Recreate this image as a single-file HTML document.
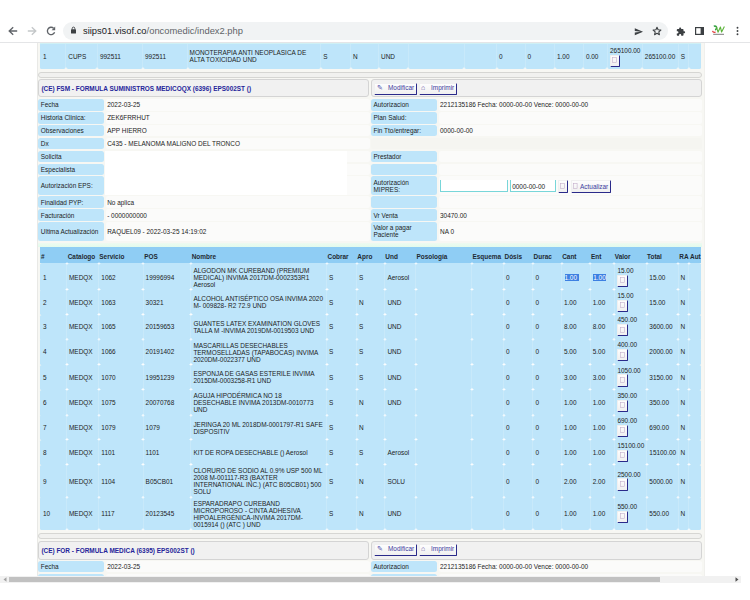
<!DOCTYPE html>
<html><head><meta charset="utf-8"><style>
html,body{margin:0;padding:0;width:750px;height:600px;overflow:hidden;background:#fff;position:relative}
body>div,body>svg{position:absolute}
.t{position:absolute;font-family:"Liberation Sans",sans-serif;font-size:6.45px;white-space:nowrap}
.btn{position:absolute;box-sizing:border-box;background:linear-gradient(#fdfdfd,#f0f0f0);border:1px solid #f0f0f0;border-right:1px solid #2a2a8a;border-bottom:1.3px solid #2a2a8a;border-radius:1.2px}
</style></head><body>
<div style="left:0;top:0;width:750px;height:42px;background:#fff"></div>
<div style="left:0;top:42px;width:750px;height:1px;background:#e4e5e7"></div>
<svg style="position:absolute;left:7px;top:25px" width="12" height="12" viewBox="0 0 12 12"><path d="M10.2 6H2.5M6.2 2.2L2.2 6L6.2 9.8" stroke="#5f6368" stroke-width="1.35" fill="none"/></svg>
<svg style="position:absolute;left:26px;top:25px" width="12" height="12" viewBox="0 0 12 12"><path d="M1.8 6H9.5M5.8 2.2L9.8 6L5.8 9.8" stroke="#c4c7c9" stroke-width="1.35" fill="none"/></svg>
<svg style="position:absolute;left:44.5px;top:25px" width="12" height="12" viewBox="0 0 12 12"><path d="M9.6 7.2A3.7 3.7 0 1 1 8.6 3.2" stroke="#5f6368" stroke-width="1.35" fill="none"/><path d="M10.2 1.6V5.2H6.6Z" fill="#5f6368"/></svg>
<div style="left:63.00px;top:22.00px;width:605.00px;height:18.00px;background:#f1f3f4;border-radius:9px"></div>
<svg style="position:absolute;left:70px;top:26px" width="7" height="8" viewBox="0 0 7 8"><rect x="1" y="3.3" width="5" height="4.2" rx="0.5" fill="#3c4043"/><path d="M2.2 3.5V2.4A1.3 1.3 0 0 1 4.8 2.4V3.5" stroke="#3c4043" stroke-width="0.9" fill="none"/></svg>
<div class="t" style="left:83px;top:25px;font-size:9.4px;line-height:12px;color:#202124">siips01.visof.co<span style="color:#5f6368">/oncomedic/index2.php</span></div>
<svg style="position:absolute;left:633.5px;top:26.5px" width="9.5" height="9.5" viewBox="0 0 24 24"><path d="M2.01 21L23 12 2.01 3 2 10l15 2-15 2z" fill="#3c4043"/></svg>
<svg style="position:absolute;left:652px;top:26px" width="10" height="10" viewBox="0 0 10 10"><path d="M5 1.2L6.1 3.8L8.9 4L6.8 5.8L7.4 8.7L5 7.2L2.6 8.7L3.2 5.8L1.1 4L3.9 3.8Z" fill="none" stroke="#3c4043" stroke-width="1.1" stroke-linejoin="round"/></svg>
<svg style="position:absolute;left:676px;top:26.5px" width="9.5" height="9.5" viewBox="0 0 24 24"><path d="M20.5 11H19V7c0-1.1-.9-2-2-2h-4V3.5C13 2.12 11.88 1 10.5 1S8 2.12 8 3.5V5H4c-1.1 0-1.99.9-1.99 2v3.8H3.5c1.49 0 2.7 1.21 2.7 2.7s-1.21 2.7-2.7 2.7H2V20c0 1.1.9 2 2 2h3.8v-1.5c0-1.490 1.21-2.7 2.7-2.7 1.49 0 2.7 1.21 2.7 2.7V22H17c1.1 0 2-.9 2-2v-4h1.5c1.38 0 2.5-1.12 2.5-2.5S21.88 11 20.5 11z" fill="#3c4043"/></svg>
<svg style="position:absolute;left:695px;top:27px" width="9" height="8" viewBox="0 0 9 8"><rect x="0.6" y="0.6" width="7.8" height="6.8" fill="none" stroke="#3c4043" stroke-width="1.2"/><rect x="5.6" y="0.6" width="2.8" height="6.8" fill="#3c4043"/></svg>
<svg style="position:absolute;left:708px;top:22px" width="20" height="18" viewBox="0 0 20 18"><path d="M5.8 4.3Q8 3.6 8.6 5.2Q9 7 7.2 8" stroke="#2e9e3e" stroke-width="1.5" fill="none"/><path d="M8.4 4.6L10 10.2L12.4 5L13.6 10L16.4 4.6" stroke="#5cb43a" stroke-width="1.1" fill="none" stroke-linejoin="round"/><path d="M4.5 8.8Q5 10.8 7.6 10.2" stroke="#e23a3a" stroke-width="1.2" fill="none"/><path d="M5.2 12.3H16" stroke="#444" stroke-width="0.7"/></svg>
<svg style="position:absolute;left:735px;top:26px" width="5" height="10" viewBox="0 0 5 10"><circle cx="2.5" cy="1.8" r="0.95" fill="#3c4043"/><circle cx="2.5" cy="5" r="0.95" fill="#3c4043"/><circle cx="2.5" cy="8.2" r="0.95" fill="#3c4043"/></svg>
<div style="left:0.00px;top:43.00px;width:750.00px;height:533.00px;background:#fff"></div>
<div style="left:37.00px;top:43.00px;width:667.50px;height:533.00px;background:#f7f7f3;border-left:1px solid #e9e9e6;border-right:1px solid #f0f0ed;box-sizing:border-box"></div>
<div style="left:40.00px;top:43.00px;width:661.20px;height:25.80px;background:#bee5fa;border-radius:1.6px"></div>
<div style="left:65.30px;top:43.00px;width:1.00px;height:25.80px;background:#c8e9fa"></div>
<div style="left:96.90px;top:43.00px;width:1.00px;height:25.80px;background:#c8e9fa"></div>
<div style="left:142.00px;top:43.00px;width:1.00px;height:25.80px;background:#c8e9fa"></div>
<div style="left:187.30px;top:43.00px;width:1.00px;height:25.80px;background:#c8e9fa"></div>
<div style="left:320.20px;top:43.00px;width:1.00px;height:25.80px;background:#c8e9fa"></div>
<div style="left:350.00px;top:43.00px;width:1.00px;height:25.80px;background:#c8e9fa"></div>
<div style="left:378.00px;top:43.00px;width:1.00px;height:25.80px;background:#c8e9fa"></div>
<div style="left:407.60px;top:43.00px;width:1.00px;height:25.80px;background:#c8e9fa"></div>
<div style="left:463.70px;top:43.00px;width:1.00px;height:25.80px;background:#c8e9fa"></div>
<div style="left:496.00px;top:43.00px;width:1.00px;height:25.80px;background:#c8e9fa"></div>
<div style="left:524.60px;top:43.00px;width:1.00px;height:25.80px;background:#c8e9fa"></div>
<div style="left:554.00px;top:43.00px;width:1.00px;height:25.80px;background:#c8e9fa"></div>
<div style="left:582.90px;top:43.00px;width:1.00px;height:25.80px;background:#c8e9fa"></div>
<div style="left:606.60px;top:43.00px;width:1.00px;height:25.80px;background:#c8e9fa"></div>
<div style="left:641.80px;top:43.00px;width:1.00px;height:25.80px;background:#c8e9fa"></div>
<div style="left:677.70px;top:43.00px;width:1.00px;height:25.80px;background:#c8e9fa"></div>
<div style="left:688.00px;top:43.00px;width:1.00px;height:25.80px;background:#c8e9fa"></div>
<div style="left:63.80px;top:67.30px;width:4px;height:3px;background:radial-gradient(closest-side,#fafaf8,rgba(255,255,255,0))"></div>
<div style="left:95.40px;top:67.30px;width:4px;height:3px;background:radial-gradient(closest-side,#fafaf8,rgba(255,255,255,0))"></div>
<div style="left:140.50px;top:67.30px;width:4px;height:3px;background:radial-gradient(closest-side,#fafaf8,rgba(255,255,255,0))"></div>
<div style="left:185.80px;top:67.30px;width:4px;height:3px;background:radial-gradient(closest-side,#fafaf8,rgba(255,255,255,0))"></div>
<div style="left:318.70px;top:67.30px;width:4px;height:3px;background:radial-gradient(closest-side,#fafaf8,rgba(255,255,255,0))"></div>
<div style="left:348.50px;top:67.30px;width:4px;height:3px;background:radial-gradient(closest-side,#fafaf8,rgba(255,255,255,0))"></div>
<div style="left:376.50px;top:67.30px;width:4px;height:3px;background:radial-gradient(closest-side,#fafaf8,rgba(255,255,255,0))"></div>
<div style="left:406.10px;top:67.30px;width:4px;height:3px;background:radial-gradient(closest-side,#fafaf8,rgba(255,255,255,0))"></div>
<div style="left:462.20px;top:67.30px;width:4px;height:3px;background:radial-gradient(closest-side,#fafaf8,rgba(255,255,255,0))"></div>
<div style="left:494.50px;top:67.30px;width:4px;height:3px;background:radial-gradient(closest-side,#fafaf8,rgba(255,255,255,0))"></div>
<div style="left:523.10px;top:67.30px;width:4px;height:3px;background:radial-gradient(closest-side,#fafaf8,rgba(255,255,255,0))"></div>
<div style="left:552.50px;top:67.30px;width:4px;height:3px;background:radial-gradient(closest-side,#fafaf8,rgba(255,255,255,0))"></div>
<div style="left:581.40px;top:67.30px;width:4px;height:3px;background:radial-gradient(closest-side,#fafaf8,rgba(255,255,255,0))"></div>
<div style="left:605.10px;top:67.30px;width:4px;height:3px;background:radial-gradient(closest-side,#fafaf8,rgba(255,255,255,0))"></div>
<div style="left:640.30px;top:67.30px;width:4px;height:3px;background:radial-gradient(closest-side,#fafaf8,rgba(255,255,255,0))"></div>
<div style="left:676.20px;top:67.30px;width:4px;height:3px;background:radial-gradient(closest-side,#fafaf8,rgba(255,255,255,0))"></div>
<div style="left:686.50px;top:67.30px;width:4px;height:3px;background:radial-gradient(closest-side,#fafaf8,rgba(255,255,255,0))"></div>
<div style="left:40.00px;top:43.00px;width:661.20px;height:1.20px;background:#cff0f4"></div>
<div class="t" style="left:43.00px;top:52.75px;line-height:7px;color:#1c1c1c">1</div>
<div class="t" style="left:68.30px;top:52.75px;line-height:7px;color:#1c1c1c">CUPS</div>
<div class="t" style="left:99.90px;top:52.75px;line-height:7px;color:#1c1c1c">992511</div>
<div class="t" style="left:145.00px;top:52.75px;line-height:7px;color:#1c1c1c">992511</div>
<div class="t" style="left:323.20px;top:52.75px;line-height:7px;color:#1c1c1c">S</div>
<div class="t" style="left:353.00px;top:52.75px;line-height:7px;color:#1c1c1c">N</div>
<div class="t" style="left:381.00px;top:52.75px;line-height:7px;color:#1c1c1c">UND</div>
<div class="t" style="left:499.00px;top:52.75px;line-height:7px;color:#1c1c1c">0</div>
<div class="t" style="left:527.60px;top:52.75px;line-height:7px;color:#1c1c1c">0</div>
<div class="t" style="left:557.00px;top:52.75px;line-height:7px;color:#1c1c1c">1.00</div>
<div class="t" style="left:585.90px;top:52.75px;line-height:7px;color:#1c1c1c">0.00</div>
<div class="t" style="left:644.80px;top:52.75px;line-height:7px;color:#1c1c1c">265100.00</div>
<div class="t" style="left:680.70px;top:52.75px;line-height:7px;color:#1c1c1c">S</div>
<div class="t" style="left:189.60px;top:49.25px;line-height:7px;color:#1c1c1c">MONOTERAPIA ANTI NEOPLASICA DE<br>ALTA TOXICIDAD UND</div>
<div class="t" style="left:610.00px;top:46.55px;line-height:7px;color:#1c1c1c">265100.00</div>
<div class="btn" style="left:610.00px;top:54.50px;width:10.30px;height:12.30px;"></div>
<svg style="position:absolute;left:612.35px;top:57.05px" width="5" height="6" viewBox="0 0 5 6"><rect x="0.5" y="0.5" width="4" height="5" fill="none" stroke="#c0a8c8" stroke-width="0.55"/></svg>
<div style="left:38.30px;top:72.30px;width:664.20px;height:5.40px;background:#f1f1ef;border:1px solid #d6d6d3;border-radius:3px;box-sizing:border-box"></div>
<div style="left:38.30px;top:79.30px;width:330.40px;height:18.20px;background:#f1f1f1;border:1px solid #d4d4d4;border-radius:3px;box-sizing:border-box"></div>
<div style="left:371.40px;top:79.30px;width:331.10px;height:18.20px;background:#f1f1f1;border:1px solid #d4d4d4;border-radius:3px;box-sizing:border-box"></div>
<div class="t" style="left:41.40px;top:84.85px;line-height:7px;color:#25259a;font-weight:bold">(CE) FSM - FORMULA SUMINISTROS MEDICOQX (6396) EPS002ST ()</div>
<div class="btn" style="left:374.00px;top:82.60px;width:43.00px;height:12.00px;"></div>
<div class="t" style="left:377.30px;top:84.15px;line-height:7px;color:#4848a8;font-size:6.5px">&#9998;</div>
<div class="t" style="left:388.00px;top:84.15px;line-height:7px;color:#3c3ca0">Modificar</div>
<div class="btn" style="left:419.30px;top:82.60px;width:37.70px;height:12.00px;"></div>
<div class="t" style="left:421.00px;top:84.15px;line-height:7px;color:#6a5aa8;font-size:7px">&#8962;</div>
<div class="t" style="left:431.00px;top:84.15px;line-height:7px;color:#3c3ca0">Imprimir</div>
<div style="left:38.30px;top:99.00px;width:65.70px;height:11.70px;background:#bee5fa;border-radius:2.5px"></div>
<div style="left:105.60px;top:99.00px;width:264.00px;height:11.70px;background:#fbfbfa;border-radius:2.5px"></div>
<div class="t" style="left:40.80px;top:101.45px;line-height:7px;color:#1c1c1c">Fecha</div>
<div class="t" style="left:107.20px;top:101.45px;line-height:7px;color:#1c1c1c">2022-03-25</div>
<div style="left:371.30px;top:99.00px;width:65.70px;height:11.70px;background:#bee5fa;border-radius:2.5px"></div>
<div style="left:438.60px;top:99.00px;width:263.90px;height:11.70px;background:#fbfbfa;border-radius:2.5px"></div>
<div class="t" style="left:373.50px;top:101.45px;line-height:7px;color:#1c1c1c">Autorizacion</div>
<div class="t" style="left:440.00px;top:101.45px;line-height:7px;color:#1c1c1c">2212135186 Fecha: 0000-00-00 Vence: 0000-00-00</div>
<div style="left:38.30px;top:111.90px;width:65.70px;height:11.70px;background:#bee5fa;border-radius:2.5px"></div>
<div style="left:105.60px;top:111.90px;width:264.00px;height:11.70px;background:#fbfbfa;border-radius:2.5px"></div>
<div class="t" style="left:40.80px;top:114.35px;line-height:7px;color:#1c1c1c">Historia Clinica:</div>
<div class="t" style="left:107.20px;top:114.35px;line-height:7px;color:#1c1c1c">ZEK6FRRHUT</div>
<div style="left:371.30px;top:111.90px;width:65.70px;height:11.70px;background:#bee5fa;border-radius:2.5px"></div>
<div style="left:438.60px;top:111.90px;width:263.90px;height:11.70px;background:#fbfbfa;border-radius:2.5px"></div>
<div class="t" style="left:373.50px;top:114.35px;line-height:7px;color:#1c1c1c">Plan Salud:</div>
<div style="left:38.30px;top:124.80px;width:65.70px;height:11.70px;background:#bee5fa;border-radius:2.5px"></div>
<div style="left:105.60px;top:124.80px;width:264.00px;height:11.70px;background:#fbfbfa;border-radius:2.5px"></div>
<div class="t" style="left:40.80px;top:127.25px;line-height:7px;color:#1c1c1c">Observaciones</div>
<div class="t" style="left:107.20px;top:127.25px;line-height:7px;color:#1c1c1c">APP HIERRO</div>
<div style="left:371.30px;top:124.80px;width:65.70px;height:11.70px;background:#bee5fa;border-radius:2.5px"></div>
<div style="left:438.60px;top:124.80px;width:263.90px;height:11.70px;background:#fbfbfa;border-radius:2.5px"></div>
<div class="t" style="left:373.50px;top:127.25px;line-height:7px;color:#1c1c1c">Fin Tto/entregar:</div>
<div class="t" style="left:440.00px;top:127.25px;line-height:7px;color:#1c1c1c">0000-00-00</div>
<div style="left:38.30px;top:137.70px;width:65.70px;height:11.60px;background:#bee5fa;border-radius:2.5px"></div>
<div style="left:105.60px;top:137.70px;width:264.00px;height:11.60px;background:#fbfbfa;border-radius:2.5px"></div>
<div class="t" style="left:40.80px;top:140.10px;line-height:7px;color:#1c1c1c">Dx</div>
<div class="t" style="left:107.20px;top:140.10px;line-height:7px;color:#1c1c1c">C435 - MELANOMA MALIGNO DEL TRONCO</div>
<div style="left:371.30px;top:137.70px;width:331.20px;height:11.60px;background:#f5f5f1;border-radius:2.5px"></div>
<div style="left:38.30px;top:150.60px;width:65.70px;height:11.70px;background:#bee5fa;border-radius:2.5px"></div>
<div style="left:105.60px;top:150.60px;width:264.00px;height:11.70px;background:#fbfbfa;border-radius:2.5px"></div>
<div class="t" style="left:40.80px;top:153.05px;line-height:7px;color:#1c1c1c">Solicita</div>
<div style="left:371.30px;top:150.60px;width:65.70px;height:11.70px;background:#bee5fa;border-radius:2.5px"></div>
<div style="left:438.60px;top:150.60px;width:263.90px;height:11.70px;background:#fbfbfa;border-radius:2.5px"></div>
<div class="t" style="left:373.50px;top:153.05px;line-height:7px;color:#1c1c1c">Prestador</div>
<div style="left:38.30px;top:163.50px;width:65.70px;height:11.70px;background:#bee5fa;border-radius:2.5px"></div>
<div style="left:105.60px;top:163.50px;width:264.00px;height:11.70px;background:#fbfbfa;border-radius:2.5px"></div>
<div class="t" style="left:40.80px;top:165.95px;line-height:7px;color:#1c1c1c">Especialista</div>
<div style="left:371.30px;top:163.50px;width:65.70px;height:11.70px;background:#bee5fa;border-radius:2.5px"></div>
<div style="left:438.60px;top:163.50px;width:263.90px;height:11.70px;background:#fbfbfa;border-radius:2.5px"></div>
<div style="left:38.30px;top:176.40px;width:65.70px;height:18.40px;background:#bee5fa;border-radius:2.5px"></div>
<div style="left:105.60px;top:176.40px;width:264.00px;height:18.40px;background:#fbfbfa;border-radius:2.5px"></div>
<div class="t" style="left:40.80px;top:182.20px;line-height:7px;color:#1c1c1c">Autorizaci&oacute;n EPS:</div>
<div style="left:371.30px;top:176.40px;width:65.70px;height:18.40px;background:#bee5fa;border-radius:2.5px"></div>
<div style="left:438.60px;top:176.40px;width:263.90px;height:18.40px;background:#fbfbfa;border-radius:2.5px"></div>
<div class="t" style="left:373.50px;top:178.65px;line-height:7px;color:#1c1c1c">Autorizaci&oacute;n<br>MIPRES:</div>
<div style="left:38.30px;top:196.20px;width:65.70px;height:11.60px;background:#bee5fa;border-radius:2.5px"></div>
<div style="left:105.60px;top:196.20px;width:264.00px;height:11.60px;background:#fbfbfa;border-radius:2.5px"></div>
<div class="t" style="left:40.80px;top:198.60px;line-height:7px;color:#1c1c1c">Finalidad PYP:</div>
<div class="t" style="left:107.20px;top:198.60px;line-height:7px;color:#1c1c1c">No aplica</div>
<div style="left:371.30px;top:196.20px;width:65.70px;height:11.60px;background:#bee5fa;border-radius:2.5px"></div>
<div style="left:438.60px;top:196.20px;width:263.90px;height:11.60px;background:#fbfbfa;border-radius:2.5px"></div>
<div style="left:38.30px;top:209.10px;width:65.70px;height:11.70px;background:#bee5fa;border-radius:2.5px"></div>
<div style="left:105.60px;top:209.10px;width:264.00px;height:11.70px;background:#fbfbfa;border-radius:2.5px"></div>
<div class="t" style="left:40.80px;top:211.55px;line-height:7px;color:#1c1c1c">Facturaci&oacute;n</div>
<div class="t" style="left:107.20px;top:211.55px;line-height:7px;color:#1c1c1c">- 0000000000</div>
<div style="left:371.30px;top:209.10px;width:65.70px;height:11.70px;background:#bee5fa;border-radius:2.5px"></div>
<div style="left:438.60px;top:209.10px;width:263.90px;height:11.70px;background:#fbfbfa;border-radius:2.5px"></div>
<div class="t" style="left:373.50px;top:211.55px;line-height:7px;color:#1c1c1c">Vr Venta</div>
<div class="t" style="left:440.00px;top:211.55px;line-height:7px;color:#1c1c1c">30470.00</div>
<div style="left:38.30px;top:222.00px;width:65.70px;height:18.80px;background:#bee5fa;border-radius:2.5px"></div>
<div style="left:105.60px;top:222.00px;width:264.00px;height:18.80px;background:#fbfbfa;border-radius:2.5px"></div>
<div class="t" style="left:40.80px;top:228.00px;line-height:7px;color:#1c1c1c">Ultima Actualizaci&oacute;n</div>
<div class="t" style="left:107.20px;top:228.00px;line-height:7px;color:#1c1c1c">RAQUEL09 - 2022-03-25 14:19:02</div>
<div style="left:371.30px;top:222.00px;width:65.70px;height:18.80px;background:#bee5fa;border-radius:2.5px"></div>
<div style="left:438.60px;top:222.00px;width:263.90px;height:18.80px;background:#fbfbfa;border-radius:2.5px"></div>
<div class="t" style="left:373.50px;top:224.45px;line-height:7px;color:#1c1c1c">Valor a pagar<br>Paciente</div>
<div class="t" style="left:440.00px;top:228.00px;line-height:7px;color:#1c1c1c">NA 0</div>
<div style="left:105.00px;top:150.80px;width:241.80px;height:44.20px;background:#fff"></div>
<div style="left:440.00px;top:179.50px;width:68.00px;height:12.80px;background:#fff;border:1px solid #78d6d9;border-top:0;box-sizing:border-box"></div>
<div style="left:509.60px;top:179.50px;width:46.10px;height:12.80px;background:#fff;border:1px solid #78d6d9;border-top:0;box-sizing:border-box"></div>
<div class="t" style="left:512.20px;top:182.65px;line-height:7px;color:#1c1c1c">0000-00-00</div>
<div class="btn" style="left:557.80px;top:180.00px;width:10.50px;height:12.50px;"></div>
<svg style="position:absolute;left:560.25px;top:182.65px" width="5" height="6" viewBox="0 0 5 6"><rect x="0.5" y="0.5" width="4" height="5" fill="none" stroke="#c0a8c8" stroke-width="0.55"/></svg>
<div class="btn" style="left:570.50px;top:180.00px;width:40.50px;height:12.50px;"></div>
<svg style="position:absolute;left:573.3px;top:183px" width="5" height="6" viewBox="0 0 5 6"><rect x="0.5" y="0.5" width="3.6" height="5" fill="none" stroke="#c0a8c8" stroke-width="0.55"/></svg>
<div class="t" style="left:580.00px;top:182.65px;line-height:7px;color:#3c3ca0">Actualizar</div>
<div style="left:38.30px;top:243.40px;width:664.20px;height:3.60px;background:linear-gradient(#eefaf1,#e2fbec)"></div>
<div style="left:40.00px;top:246.60px;width:661.00px;height:16.40px;background:#8fcdf4"></div>
<div class="t" style="left:41.00px;top:253.05px;line-height:7px;color:#1e2a33;font-weight:bold">#</div>
<div class="t" style="left:67.70px;top:253.05px;line-height:7px;color:#1e2a33;font-weight:bold">Catalogo</div>
<div class="t" style="left:99.30px;top:253.05px;line-height:7px;color:#1e2a33;font-weight:bold">Servicio</div>
<div class="t" style="left:144.30px;top:253.05px;line-height:7px;color:#1e2a33;font-weight:bold">POS</div>
<div class="t" style="left:191.70px;top:253.05px;line-height:7px;color:#1e2a33;font-weight:bold">Nombre</div>
<div class="t" style="left:327.50px;top:253.05px;line-height:7px;color:#1e2a33;font-weight:bold">Cobrar</div>
<div class="t" style="left:357.30px;top:253.05px;line-height:7px;color:#1e2a33;font-weight:bold">Apro</div>
<div class="t" style="left:385.30px;top:253.05px;line-height:7px;color:#1e2a33;font-weight:bold">Und</div>
<div class="t" style="left:416.50px;top:253.05px;line-height:7px;color:#1e2a33;font-weight:bold">Posolog&iacute;a</div>
<div class="t" style="left:472.50px;top:253.05px;line-height:7px;color:#1e2a33;font-weight:bold">Esquema</div>
<div class="t" style="left:504.50px;top:253.05px;line-height:7px;color:#1e2a33;font-weight:bold">D&oacute;sis</div>
<div class="t" style="left:533.60px;top:253.05px;line-height:7px;color:#1e2a33;font-weight:bold">Durac</div>
<div class="t" style="left:562.20px;top:253.05px;line-height:7px;color:#1e2a33;font-weight:bold">Cant</div>
<div class="t" style="left:591.00px;top:253.05px;line-height:7px;color:#1e2a33;font-weight:bold">Ent</div>
<div class="t" style="left:614.80px;top:253.05px;line-height:7px;color:#1e2a33;font-weight:bold">Valor</div>
<div class="t" style="left:647.00px;top:253.05px;line-height:7px;color:#1e2a33;font-weight:bold">Total</div>
<div class="t" style="left:679.30px;top:253.05px;line-height:7px;color:#1e2a33;font-weight:bold">RA</div>
<div class="t" style="left:690.00px;top:253.05px;line-height:7px;color:#1e2a33;font-weight:bold">Aut</div>
<div style="left:40.00px;top:263.00px;width:661.30px;height:27.50px;background:#bee5fa;border-radius:1.6px"></div>
<div style="left:66.00px;top:263.00px;width:1.00px;height:27.50px;background:#c8e9fa"></div>
<div style="left:98.30px;top:263.00px;width:1.00px;height:27.50px;background:#c8e9fa"></div>
<div style="left:142.60px;top:263.00px;width:1.00px;height:27.50px;background:#c8e9fa"></div>
<div style="left:190.00px;top:263.00px;width:1.00px;height:27.50px;background:#c8e9fa"></div>
<div style="left:326.00px;top:263.00px;width:1.00px;height:27.50px;background:#c8e9fa"></div>
<div style="left:356.00px;top:263.00px;width:1.00px;height:27.50px;background:#c8e9fa"></div>
<div style="left:384.40px;top:263.00px;width:1.00px;height:27.50px;background:#c8e9fa"></div>
<div style="left:415.00px;top:263.00px;width:1.00px;height:27.50px;background:#c8e9fa"></div>
<div style="left:471.30px;top:263.00px;width:1.00px;height:27.50px;background:#c8e9fa"></div>
<div style="left:503.00px;top:263.00px;width:1.00px;height:27.50px;background:#c8e9fa"></div>
<div style="left:532.40px;top:263.00px;width:1.00px;height:27.50px;background:#c8e9fa"></div>
<div style="left:561.00px;top:263.00px;width:1.00px;height:27.50px;background:#c8e9fa"></div>
<div style="left:589.70px;top:263.00px;width:1.00px;height:27.50px;background:#c8e9fa"></div>
<div style="left:613.60px;top:263.00px;width:1.00px;height:27.50px;background:#c8e9fa"></div>
<div style="left:646.30px;top:263.00px;width:1.00px;height:27.50px;background:#c8e9fa"></div>
<div style="left:677.60px;top:263.00px;width:1.00px;height:27.50px;background:#c8e9fa"></div>
<div style="left:688.00px;top:263.00px;width:1.00px;height:27.50px;background:#c8e9fa"></div>
<div style="left:64.50px;top:261.50px;width:4px;height:3px;background:radial-gradient(closest-side,#ffffff,rgba(255,255,255,0))"></div>
<div style="left:96.80px;top:261.50px;width:4px;height:3px;background:radial-gradient(closest-side,#ffffff,rgba(255,255,255,0))"></div>
<div style="left:141.10px;top:261.50px;width:4px;height:3px;background:radial-gradient(closest-side,#ffffff,rgba(255,255,255,0))"></div>
<div style="left:188.50px;top:261.50px;width:4px;height:3px;background:radial-gradient(closest-side,#ffffff,rgba(255,255,255,0))"></div>
<div style="left:324.50px;top:261.50px;width:4px;height:3px;background:radial-gradient(closest-side,#ffffff,rgba(255,255,255,0))"></div>
<div style="left:354.50px;top:261.50px;width:4px;height:3px;background:radial-gradient(closest-side,#ffffff,rgba(255,255,255,0))"></div>
<div style="left:382.90px;top:261.50px;width:4px;height:3px;background:radial-gradient(closest-side,#ffffff,rgba(255,255,255,0))"></div>
<div style="left:413.50px;top:261.50px;width:4px;height:3px;background:radial-gradient(closest-side,#ffffff,rgba(255,255,255,0))"></div>
<div style="left:469.80px;top:261.50px;width:4px;height:3px;background:radial-gradient(closest-side,#ffffff,rgba(255,255,255,0))"></div>
<div style="left:501.50px;top:261.50px;width:4px;height:3px;background:radial-gradient(closest-side,#ffffff,rgba(255,255,255,0))"></div>
<div style="left:530.90px;top:261.50px;width:4px;height:3px;background:radial-gradient(closest-side,#ffffff,rgba(255,255,255,0))"></div>
<div style="left:559.50px;top:261.50px;width:4px;height:3px;background:radial-gradient(closest-side,#ffffff,rgba(255,255,255,0))"></div>
<div style="left:588.20px;top:261.50px;width:4px;height:3px;background:radial-gradient(closest-side,#ffffff,rgba(255,255,255,0))"></div>
<div style="left:612.10px;top:261.50px;width:4px;height:3px;background:radial-gradient(closest-side,#ffffff,rgba(255,255,255,0))"></div>
<div style="left:644.80px;top:261.50px;width:4px;height:3px;background:radial-gradient(closest-side,#ffffff,rgba(255,255,255,0))"></div>
<div style="left:676.10px;top:261.50px;width:4px;height:3px;background:radial-gradient(closest-side,#ffffff,rgba(255,255,255,0))"></div>
<div style="left:686.50px;top:261.50px;width:4px;height:3px;background:radial-gradient(closest-side,#ffffff,rgba(255,255,255,0))"></div>
<div style="left:64.50px;top:288.30px;width:4px;height:3px;background:radial-gradient(closest-side,#ffffff,rgba(255,255,255,0))"></div>
<div style="left:96.80px;top:288.30px;width:4px;height:3px;background:radial-gradient(closest-side,#ffffff,rgba(255,255,255,0))"></div>
<div style="left:141.10px;top:288.30px;width:4px;height:3px;background:radial-gradient(closest-side,#ffffff,rgba(255,255,255,0))"></div>
<div style="left:188.50px;top:288.30px;width:4px;height:3px;background:radial-gradient(closest-side,#ffffff,rgba(255,255,255,0))"></div>
<div style="left:324.50px;top:288.30px;width:4px;height:3px;background:radial-gradient(closest-side,#ffffff,rgba(255,255,255,0))"></div>
<div style="left:354.50px;top:288.30px;width:4px;height:3px;background:radial-gradient(closest-side,#ffffff,rgba(255,255,255,0))"></div>
<div style="left:382.90px;top:288.30px;width:4px;height:3px;background:radial-gradient(closest-side,#ffffff,rgba(255,255,255,0))"></div>
<div style="left:413.50px;top:288.30px;width:4px;height:3px;background:radial-gradient(closest-side,#ffffff,rgba(255,255,255,0))"></div>
<div style="left:469.80px;top:288.30px;width:4px;height:3px;background:radial-gradient(closest-side,#ffffff,rgba(255,255,255,0))"></div>
<div style="left:501.50px;top:288.30px;width:4px;height:3px;background:radial-gradient(closest-side,#ffffff,rgba(255,255,255,0))"></div>
<div style="left:530.90px;top:288.30px;width:4px;height:3px;background:radial-gradient(closest-side,#ffffff,rgba(255,255,255,0))"></div>
<div style="left:559.50px;top:288.30px;width:4px;height:3px;background:radial-gradient(closest-side,#ffffff,rgba(255,255,255,0))"></div>
<div style="left:588.20px;top:288.30px;width:4px;height:3px;background:radial-gradient(closest-side,#ffffff,rgba(255,255,255,0))"></div>
<div style="left:612.10px;top:288.30px;width:4px;height:3px;background:radial-gradient(closest-side,#ffffff,rgba(255,255,255,0))"></div>
<div style="left:644.80px;top:288.30px;width:4px;height:3px;background:radial-gradient(closest-side,#ffffff,rgba(255,255,255,0))"></div>
<div style="left:676.10px;top:288.30px;width:4px;height:3px;background:radial-gradient(closest-side,#ffffff,rgba(255,255,255,0))"></div>
<div style="left:686.50px;top:288.30px;width:4px;height:3px;background:radial-gradient(closest-side,#ffffff,rgba(255,255,255,0))"></div>
<div class="t" style="left:43.00px;top:273.90px;line-height:7px;color:#1c1c1c">1</div>
<div class="t" style="left:69.00px;top:273.90px;line-height:7px;color:#1c1c1c">MEDQX</div>
<div class="t" style="left:101.30px;top:273.90px;line-height:7px;color:#1c1c1c">1062</div>
<div class="t" style="left:145.60px;top:273.90px;line-height:7px;color:#1c1c1c">19996994</div>
<div class="t" style="left:329.00px;top:273.90px;line-height:7px;color:#1c1c1c">S</div>
<div class="t" style="left:359.00px;top:273.90px;line-height:7px;color:#1c1c1c">S</div>
<div class="t" style="left:387.40px;top:273.90px;line-height:7px;color:#1c1c1c">Aerosol</div>
<div class="t" style="left:506.00px;top:273.90px;line-height:7px;color:#1c1c1c">0</div>
<div class="t" style="left:535.40px;top:273.90px;line-height:7px;color:#1c1c1c">0</div>
<div class="t" style="left:564.50px;top:273.90px;line-height:7px;color:#fff"><span style="background:#3d80e2;padding-right:1.5px">1.00</span></div>
<div class="t" style="left:593.20px;top:273.90px;line-height:7px;color:#fff"><span style="background:#3d80e2;padding-right:0px">1.00</span></div>
<div class="t" style="left:649.30px;top:273.90px;line-height:7px;color:#1c1c1c">15.00</div>
<div class="t" style="left:680.60px;top:273.90px;line-height:7px;color:#1c1c1c">N</div>
<div class="t" style="left:193.40px;top:267.10px;line-height:7px;color:#1c1c1c">ALGODON MK CUREBAND (PREMIUM<br>MEDICAL) INVIMA 2017DM-0002353R1<br>Aerosol</div>
<div class="t" style="left:617.40px;top:266.90px;line-height:7px;color:#1c1c1c">15.00</div>
<div class="btn" style="left:617.40px;top:274.70px;width:10.30px;height:12.30px;"></div>
<svg style="position:absolute;left:619.75px;top:277.25px" width="5" height="6" viewBox="0 0 5 6"><rect x="0.5" y="0.5" width="4" height="5" fill="none" stroke="#c0a8c8" stroke-width="0.55"/></svg>
<div style="left:40.00px;top:289.80px;width:661.30px;height:25.40px;background:#bee5fa;border-radius:1.6px"></div>
<div style="left:66.00px;top:289.80px;width:1.00px;height:25.40px;background:#c8e9fa"></div>
<div style="left:98.30px;top:289.80px;width:1.00px;height:25.40px;background:#c8e9fa"></div>
<div style="left:142.60px;top:289.80px;width:1.00px;height:25.40px;background:#c8e9fa"></div>
<div style="left:190.00px;top:289.80px;width:1.00px;height:25.40px;background:#c8e9fa"></div>
<div style="left:326.00px;top:289.80px;width:1.00px;height:25.40px;background:#c8e9fa"></div>
<div style="left:356.00px;top:289.80px;width:1.00px;height:25.40px;background:#c8e9fa"></div>
<div style="left:384.40px;top:289.80px;width:1.00px;height:25.40px;background:#c8e9fa"></div>
<div style="left:415.00px;top:289.80px;width:1.00px;height:25.40px;background:#c8e9fa"></div>
<div style="left:471.30px;top:289.80px;width:1.00px;height:25.40px;background:#c8e9fa"></div>
<div style="left:503.00px;top:289.80px;width:1.00px;height:25.40px;background:#c8e9fa"></div>
<div style="left:532.40px;top:289.80px;width:1.00px;height:25.40px;background:#c8e9fa"></div>
<div style="left:561.00px;top:289.80px;width:1.00px;height:25.40px;background:#c8e9fa"></div>
<div style="left:589.70px;top:289.80px;width:1.00px;height:25.40px;background:#c8e9fa"></div>
<div style="left:613.60px;top:289.80px;width:1.00px;height:25.40px;background:#c8e9fa"></div>
<div style="left:646.30px;top:289.80px;width:1.00px;height:25.40px;background:#c8e9fa"></div>
<div style="left:677.60px;top:289.80px;width:1.00px;height:25.40px;background:#c8e9fa"></div>
<div style="left:688.00px;top:289.80px;width:1.00px;height:25.40px;background:#c8e9fa"></div>
<div style="left:64.50px;top:288.30px;width:4px;height:3px;background:radial-gradient(closest-side,#ffffff,rgba(255,255,255,0))"></div>
<div style="left:96.80px;top:288.30px;width:4px;height:3px;background:radial-gradient(closest-side,#ffffff,rgba(255,255,255,0))"></div>
<div style="left:141.10px;top:288.30px;width:4px;height:3px;background:radial-gradient(closest-side,#ffffff,rgba(255,255,255,0))"></div>
<div style="left:188.50px;top:288.30px;width:4px;height:3px;background:radial-gradient(closest-side,#ffffff,rgba(255,255,255,0))"></div>
<div style="left:324.50px;top:288.30px;width:4px;height:3px;background:radial-gradient(closest-side,#ffffff,rgba(255,255,255,0))"></div>
<div style="left:354.50px;top:288.30px;width:4px;height:3px;background:radial-gradient(closest-side,#ffffff,rgba(255,255,255,0))"></div>
<div style="left:382.90px;top:288.30px;width:4px;height:3px;background:radial-gradient(closest-side,#ffffff,rgba(255,255,255,0))"></div>
<div style="left:413.50px;top:288.30px;width:4px;height:3px;background:radial-gradient(closest-side,#ffffff,rgba(255,255,255,0))"></div>
<div style="left:469.80px;top:288.30px;width:4px;height:3px;background:radial-gradient(closest-side,#ffffff,rgba(255,255,255,0))"></div>
<div style="left:501.50px;top:288.30px;width:4px;height:3px;background:radial-gradient(closest-side,#ffffff,rgba(255,255,255,0))"></div>
<div style="left:530.90px;top:288.30px;width:4px;height:3px;background:radial-gradient(closest-side,#ffffff,rgba(255,255,255,0))"></div>
<div style="left:559.50px;top:288.30px;width:4px;height:3px;background:radial-gradient(closest-side,#ffffff,rgba(255,255,255,0))"></div>
<div style="left:588.20px;top:288.30px;width:4px;height:3px;background:radial-gradient(closest-side,#ffffff,rgba(255,255,255,0))"></div>
<div style="left:612.10px;top:288.30px;width:4px;height:3px;background:radial-gradient(closest-side,#ffffff,rgba(255,255,255,0))"></div>
<div style="left:644.80px;top:288.30px;width:4px;height:3px;background:radial-gradient(closest-side,#ffffff,rgba(255,255,255,0))"></div>
<div style="left:676.10px;top:288.30px;width:4px;height:3px;background:radial-gradient(closest-side,#ffffff,rgba(255,255,255,0))"></div>
<div style="left:686.50px;top:288.30px;width:4px;height:3px;background:radial-gradient(closest-side,#ffffff,rgba(255,255,255,0))"></div>
<div style="left:64.50px;top:313.00px;width:4px;height:3px;background:radial-gradient(closest-side,#ffffff,rgba(255,255,255,0))"></div>
<div style="left:96.80px;top:313.00px;width:4px;height:3px;background:radial-gradient(closest-side,#ffffff,rgba(255,255,255,0))"></div>
<div style="left:141.10px;top:313.00px;width:4px;height:3px;background:radial-gradient(closest-side,#ffffff,rgba(255,255,255,0))"></div>
<div style="left:188.50px;top:313.00px;width:4px;height:3px;background:radial-gradient(closest-side,#ffffff,rgba(255,255,255,0))"></div>
<div style="left:324.50px;top:313.00px;width:4px;height:3px;background:radial-gradient(closest-side,#ffffff,rgba(255,255,255,0))"></div>
<div style="left:354.50px;top:313.00px;width:4px;height:3px;background:radial-gradient(closest-side,#ffffff,rgba(255,255,255,0))"></div>
<div style="left:382.90px;top:313.00px;width:4px;height:3px;background:radial-gradient(closest-side,#ffffff,rgba(255,255,255,0))"></div>
<div style="left:413.50px;top:313.00px;width:4px;height:3px;background:radial-gradient(closest-side,#ffffff,rgba(255,255,255,0))"></div>
<div style="left:469.80px;top:313.00px;width:4px;height:3px;background:radial-gradient(closest-side,#ffffff,rgba(255,255,255,0))"></div>
<div style="left:501.50px;top:313.00px;width:4px;height:3px;background:radial-gradient(closest-side,#ffffff,rgba(255,255,255,0))"></div>
<div style="left:530.90px;top:313.00px;width:4px;height:3px;background:radial-gradient(closest-side,#ffffff,rgba(255,255,255,0))"></div>
<div style="left:559.50px;top:313.00px;width:4px;height:3px;background:radial-gradient(closest-side,#ffffff,rgba(255,255,255,0))"></div>
<div style="left:588.20px;top:313.00px;width:4px;height:3px;background:radial-gradient(closest-side,#ffffff,rgba(255,255,255,0))"></div>
<div style="left:612.10px;top:313.00px;width:4px;height:3px;background:radial-gradient(closest-side,#ffffff,rgba(255,255,255,0))"></div>
<div style="left:644.80px;top:313.00px;width:4px;height:3px;background:radial-gradient(closest-side,#ffffff,rgba(255,255,255,0))"></div>
<div style="left:676.10px;top:313.00px;width:4px;height:3px;background:radial-gradient(closest-side,#ffffff,rgba(255,255,255,0))"></div>
<div style="left:686.50px;top:313.00px;width:4px;height:3px;background:radial-gradient(closest-side,#ffffff,rgba(255,255,255,0))"></div>
<div class="t" style="left:43.00px;top:298.75px;line-height:7px;color:#1c1c1c">2</div>
<div class="t" style="left:69.00px;top:298.75px;line-height:7px;color:#1c1c1c">MEDQX</div>
<div class="t" style="left:101.30px;top:298.75px;line-height:7px;color:#1c1c1c">1063</div>
<div class="t" style="left:145.60px;top:298.75px;line-height:7px;color:#1c1c1c">30321</div>
<div class="t" style="left:329.00px;top:298.75px;line-height:7px;color:#1c1c1c">S</div>
<div class="t" style="left:359.00px;top:298.75px;line-height:7px;color:#1c1c1c">N</div>
<div class="t" style="left:387.40px;top:298.75px;line-height:7px;color:#1c1c1c">UND</div>
<div class="t" style="left:506.00px;top:298.75px;line-height:7px;color:#1c1c1c">0</div>
<div class="t" style="left:535.40px;top:298.75px;line-height:7px;color:#1c1c1c">0</div>
<div class="t" style="left:564.00px;top:298.75px;line-height:7px;color:#1c1c1c">1.00</div>
<div class="t" style="left:592.70px;top:298.75px;line-height:7px;color:#1c1c1c">1.00</div>
<div class="t" style="left:649.30px;top:298.75px;line-height:7px;color:#1c1c1c">15.00</div>
<div class="t" style="left:680.60px;top:298.75px;line-height:7px;color:#1c1c1c">N</div>
<div class="t" style="left:193.40px;top:295.45px;line-height:7px;color:#1c1c1c">ALCOHOL ANTIS&Eacute;PTICO OSA INVIMA 2020<br>M- 009828- R2 72.9 UND</div>
<div class="t" style="left:617.40px;top:291.75px;line-height:7px;color:#1c1c1c">15.00</div>
<div class="btn" style="left:617.40px;top:299.55px;width:10.30px;height:12.30px;"></div>
<svg style="position:absolute;left:619.75px;top:302.10px" width="5" height="6" viewBox="0 0 5 6"><rect x="0.5" y="0.5" width="4" height="5" fill="none" stroke="#c0a8c8" stroke-width="0.55"/></svg>
<div style="left:40.00px;top:314.50px;width:661.30px;height:25.20px;background:#bee5fa;border-radius:1.6px"></div>
<div style="left:66.00px;top:314.50px;width:1.00px;height:25.20px;background:#c8e9fa"></div>
<div style="left:98.30px;top:314.50px;width:1.00px;height:25.20px;background:#c8e9fa"></div>
<div style="left:142.60px;top:314.50px;width:1.00px;height:25.20px;background:#c8e9fa"></div>
<div style="left:190.00px;top:314.50px;width:1.00px;height:25.20px;background:#c8e9fa"></div>
<div style="left:326.00px;top:314.50px;width:1.00px;height:25.20px;background:#c8e9fa"></div>
<div style="left:356.00px;top:314.50px;width:1.00px;height:25.20px;background:#c8e9fa"></div>
<div style="left:384.40px;top:314.50px;width:1.00px;height:25.20px;background:#c8e9fa"></div>
<div style="left:415.00px;top:314.50px;width:1.00px;height:25.20px;background:#c8e9fa"></div>
<div style="left:471.30px;top:314.50px;width:1.00px;height:25.20px;background:#c8e9fa"></div>
<div style="left:503.00px;top:314.50px;width:1.00px;height:25.20px;background:#c8e9fa"></div>
<div style="left:532.40px;top:314.50px;width:1.00px;height:25.20px;background:#c8e9fa"></div>
<div style="left:561.00px;top:314.50px;width:1.00px;height:25.20px;background:#c8e9fa"></div>
<div style="left:589.70px;top:314.50px;width:1.00px;height:25.20px;background:#c8e9fa"></div>
<div style="left:613.60px;top:314.50px;width:1.00px;height:25.20px;background:#c8e9fa"></div>
<div style="left:646.30px;top:314.50px;width:1.00px;height:25.20px;background:#c8e9fa"></div>
<div style="left:677.60px;top:314.50px;width:1.00px;height:25.20px;background:#c8e9fa"></div>
<div style="left:688.00px;top:314.50px;width:1.00px;height:25.20px;background:#c8e9fa"></div>
<div style="left:64.50px;top:313.00px;width:4px;height:3px;background:radial-gradient(closest-side,#ffffff,rgba(255,255,255,0))"></div>
<div style="left:96.80px;top:313.00px;width:4px;height:3px;background:radial-gradient(closest-side,#ffffff,rgba(255,255,255,0))"></div>
<div style="left:141.10px;top:313.00px;width:4px;height:3px;background:radial-gradient(closest-side,#ffffff,rgba(255,255,255,0))"></div>
<div style="left:188.50px;top:313.00px;width:4px;height:3px;background:radial-gradient(closest-side,#ffffff,rgba(255,255,255,0))"></div>
<div style="left:324.50px;top:313.00px;width:4px;height:3px;background:radial-gradient(closest-side,#ffffff,rgba(255,255,255,0))"></div>
<div style="left:354.50px;top:313.00px;width:4px;height:3px;background:radial-gradient(closest-side,#ffffff,rgba(255,255,255,0))"></div>
<div style="left:382.90px;top:313.00px;width:4px;height:3px;background:radial-gradient(closest-side,#ffffff,rgba(255,255,255,0))"></div>
<div style="left:413.50px;top:313.00px;width:4px;height:3px;background:radial-gradient(closest-side,#ffffff,rgba(255,255,255,0))"></div>
<div style="left:469.80px;top:313.00px;width:4px;height:3px;background:radial-gradient(closest-side,#ffffff,rgba(255,255,255,0))"></div>
<div style="left:501.50px;top:313.00px;width:4px;height:3px;background:radial-gradient(closest-side,#ffffff,rgba(255,255,255,0))"></div>
<div style="left:530.90px;top:313.00px;width:4px;height:3px;background:radial-gradient(closest-side,#ffffff,rgba(255,255,255,0))"></div>
<div style="left:559.50px;top:313.00px;width:4px;height:3px;background:radial-gradient(closest-side,#ffffff,rgba(255,255,255,0))"></div>
<div style="left:588.20px;top:313.00px;width:4px;height:3px;background:radial-gradient(closest-side,#ffffff,rgba(255,255,255,0))"></div>
<div style="left:612.10px;top:313.00px;width:4px;height:3px;background:radial-gradient(closest-side,#ffffff,rgba(255,255,255,0))"></div>
<div style="left:644.80px;top:313.00px;width:4px;height:3px;background:radial-gradient(closest-side,#ffffff,rgba(255,255,255,0))"></div>
<div style="left:676.10px;top:313.00px;width:4px;height:3px;background:radial-gradient(closest-side,#ffffff,rgba(255,255,255,0))"></div>
<div style="left:686.50px;top:313.00px;width:4px;height:3px;background:radial-gradient(closest-side,#ffffff,rgba(255,255,255,0))"></div>
<div style="left:64.50px;top:337.50px;width:4px;height:3px;background:radial-gradient(closest-side,#ffffff,rgba(255,255,255,0))"></div>
<div style="left:96.80px;top:337.50px;width:4px;height:3px;background:radial-gradient(closest-side,#ffffff,rgba(255,255,255,0))"></div>
<div style="left:141.10px;top:337.50px;width:4px;height:3px;background:radial-gradient(closest-side,#ffffff,rgba(255,255,255,0))"></div>
<div style="left:188.50px;top:337.50px;width:4px;height:3px;background:radial-gradient(closest-side,#ffffff,rgba(255,255,255,0))"></div>
<div style="left:324.50px;top:337.50px;width:4px;height:3px;background:radial-gradient(closest-side,#ffffff,rgba(255,255,255,0))"></div>
<div style="left:354.50px;top:337.50px;width:4px;height:3px;background:radial-gradient(closest-side,#ffffff,rgba(255,255,255,0))"></div>
<div style="left:382.90px;top:337.50px;width:4px;height:3px;background:radial-gradient(closest-side,#ffffff,rgba(255,255,255,0))"></div>
<div style="left:413.50px;top:337.50px;width:4px;height:3px;background:radial-gradient(closest-side,#ffffff,rgba(255,255,255,0))"></div>
<div style="left:469.80px;top:337.50px;width:4px;height:3px;background:radial-gradient(closest-side,#ffffff,rgba(255,255,255,0))"></div>
<div style="left:501.50px;top:337.50px;width:4px;height:3px;background:radial-gradient(closest-side,#ffffff,rgba(255,255,255,0))"></div>
<div style="left:530.90px;top:337.50px;width:4px;height:3px;background:radial-gradient(closest-side,#ffffff,rgba(255,255,255,0))"></div>
<div style="left:559.50px;top:337.50px;width:4px;height:3px;background:radial-gradient(closest-side,#ffffff,rgba(255,255,255,0))"></div>
<div style="left:588.20px;top:337.50px;width:4px;height:3px;background:radial-gradient(closest-side,#ffffff,rgba(255,255,255,0))"></div>
<div style="left:612.10px;top:337.50px;width:4px;height:3px;background:radial-gradient(closest-side,#ffffff,rgba(255,255,255,0))"></div>
<div style="left:644.80px;top:337.50px;width:4px;height:3px;background:radial-gradient(closest-side,#ffffff,rgba(255,255,255,0))"></div>
<div style="left:676.10px;top:337.50px;width:4px;height:3px;background:radial-gradient(closest-side,#ffffff,rgba(255,255,255,0))"></div>
<div style="left:686.50px;top:337.50px;width:4px;height:3px;background:radial-gradient(closest-side,#ffffff,rgba(255,255,255,0))"></div>
<div class="t" style="left:43.00px;top:323.35px;line-height:7px;color:#1c1c1c">3</div>
<div class="t" style="left:69.00px;top:323.35px;line-height:7px;color:#1c1c1c">MEDQX</div>
<div class="t" style="left:101.30px;top:323.35px;line-height:7px;color:#1c1c1c">1065</div>
<div class="t" style="left:145.60px;top:323.35px;line-height:7px;color:#1c1c1c">20159653</div>
<div class="t" style="left:329.00px;top:323.35px;line-height:7px;color:#1c1c1c">S</div>
<div class="t" style="left:359.00px;top:323.35px;line-height:7px;color:#1c1c1c">S</div>
<div class="t" style="left:387.40px;top:323.35px;line-height:7px;color:#1c1c1c">UND</div>
<div class="t" style="left:506.00px;top:323.35px;line-height:7px;color:#1c1c1c">0</div>
<div class="t" style="left:535.40px;top:323.35px;line-height:7px;color:#1c1c1c">0</div>
<div class="t" style="left:564.00px;top:323.35px;line-height:7px;color:#1c1c1c">8.00</div>
<div class="t" style="left:592.70px;top:323.35px;line-height:7px;color:#1c1c1c">8.00</div>
<div class="t" style="left:649.30px;top:323.35px;line-height:7px;color:#1c1c1c">3600.00</div>
<div class="t" style="left:680.60px;top:323.35px;line-height:7px;color:#1c1c1c">N</div>
<div class="t" style="left:193.40px;top:320.05px;line-height:7px;color:#1c1c1c">GUANTES LATEX EXAMINATION GLOVES<br>TALLA M -INVIMA 2019DM-0019503 UND</div>
<div class="t" style="left:617.40px;top:316.35px;line-height:7px;color:#1c1c1c">450.00</div>
<div class="btn" style="left:617.40px;top:324.15px;width:10.30px;height:12.30px;"></div>
<svg style="position:absolute;left:619.75px;top:326.70px" width="5" height="6" viewBox="0 0 5 6"><rect x="0.5" y="0.5" width="4" height="5" fill="none" stroke="#c0a8c8" stroke-width="0.55"/></svg>
<div style="left:40.00px;top:339.00px;width:661.30px;height:26.20px;background:#bee5fa;border-radius:1.6px"></div>
<div style="left:66.00px;top:339.00px;width:1.00px;height:26.20px;background:#c8e9fa"></div>
<div style="left:98.30px;top:339.00px;width:1.00px;height:26.20px;background:#c8e9fa"></div>
<div style="left:142.60px;top:339.00px;width:1.00px;height:26.20px;background:#c8e9fa"></div>
<div style="left:190.00px;top:339.00px;width:1.00px;height:26.20px;background:#c8e9fa"></div>
<div style="left:326.00px;top:339.00px;width:1.00px;height:26.20px;background:#c8e9fa"></div>
<div style="left:356.00px;top:339.00px;width:1.00px;height:26.20px;background:#c8e9fa"></div>
<div style="left:384.40px;top:339.00px;width:1.00px;height:26.20px;background:#c8e9fa"></div>
<div style="left:415.00px;top:339.00px;width:1.00px;height:26.20px;background:#c8e9fa"></div>
<div style="left:471.30px;top:339.00px;width:1.00px;height:26.20px;background:#c8e9fa"></div>
<div style="left:503.00px;top:339.00px;width:1.00px;height:26.20px;background:#c8e9fa"></div>
<div style="left:532.40px;top:339.00px;width:1.00px;height:26.20px;background:#c8e9fa"></div>
<div style="left:561.00px;top:339.00px;width:1.00px;height:26.20px;background:#c8e9fa"></div>
<div style="left:589.70px;top:339.00px;width:1.00px;height:26.20px;background:#c8e9fa"></div>
<div style="left:613.60px;top:339.00px;width:1.00px;height:26.20px;background:#c8e9fa"></div>
<div style="left:646.30px;top:339.00px;width:1.00px;height:26.20px;background:#c8e9fa"></div>
<div style="left:677.60px;top:339.00px;width:1.00px;height:26.20px;background:#c8e9fa"></div>
<div style="left:688.00px;top:339.00px;width:1.00px;height:26.20px;background:#c8e9fa"></div>
<div style="left:64.50px;top:337.50px;width:4px;height:3px;background:radial-gradient(closest-side,#ffffff,rgba(255,255,255,0))"></div>
<div style="left:96.80px;top:337.50px;width:4px;height:3px;background:radial-gradient(closest-side,#ffffff,rgba(255,255,255,0))"></div>
<div style="left:141.10px;top:337.50px;width:4px;height:3px;background:radial-gradient(closest-side,#ffffff,rgba(255,255,255,0))"></div>
<div style="left:188.50px;top:337.50px;width:4px;height:3px;background:radial-gradient(closest-side,#ffffff,rgba(255,255,255,0))"></div>
<div style="left:324.50px;top:337.50px;width:4px;height:3px;background:radial-gradient(closest-side,#ffffff,rgba(255,255,255,0))"></div>
<div style="left:354.50px;top:337.50px;width:4px;height:3px;background:radial-gradient(closest-side,#ffffff,rgba(255,255,255,0))"></div>
<div style="left:382.90px;top:337.50px;width:4px;height:3px;background:radial-gradient(closest-side,#ffffff,rgba(255,255,255,0))"></div>
<div style="left:413.50px;top:337.50px;width:4px;height:3px;background:radial-gradient(closest-side,#ffffff,rgba(255,255,255,0))"></div>
<div style="left:469.80px;top:337.50px;width:4px;height:3px;background:radial-gradient(closest-side,#ffffff,rgba(255,255,255,0))"></div>
<div style="left:501.50px;top:337.50px;width:4px;height:3px;background:radial-gradient(closest-side,#ffffff,rgba(255,255,255,0))"></div>
<div style="left:530.90px;top:337.50px;width:4px;height:3px;background:radial-gradient(closest-side,#ffffff,rgba(255,255,255,0))"></div>
<div style="left:559.50px;top:337.50px;width:4px;height:3px;background:radial-gradient(closest-side,#ffffff,rgba(255,255,255,0))"></div>
<div style="left:588.20px;top:337.50px;width:4px;height:3px;background:radial-gradient(closest-side,#ffffff,rgba(255,255,255,0))"></div>
<div style="left:612.10px;top:337.50px;width:4px;height:3px;background:radial-gradient(closest-side,#ffffff,rgba(255,255,255,0))"></div>
<div style="left:644.80px;top:337.50px;width:4px;height:3px;background:radial-gradient(closest-side,#ffffff,rgba(255,255,255,0))"></div>
<div style="left:676.10px;top:337.50px;width:4px;height:3px;background:radial-gradient(closest-side,#ffffff,rgba(255,255,255,0))"></div>
<div style="left:686.50px;top:337.50px;width:4px;height:3px;background:radial-gradient(closest-side,#ffffff,rgba(255,255,255,0))"></div>
<div style="left:64.50px;top:363.00px;width:4px;height:3px;background:radial-gradient(closest-side,#ffffff,rgba(255,255,255,0))"></div>
<div style="left:96.80px;top:363.00px;width:4px;height:3px;background:radial-gradient(closest-side,#ffffff,rgba(255,255,255,0))"></div>
<div style="left:141.10px;top:363.00px;width:4px;height:3px;background:radial-gradient(closest-side,#ffffff,rgba(255,255,255,0))"></div>
<div style="left:188.50px;top:363.00px;width:4px;height:3px;background:radial-gradient(closest-side,#ffffff,rgba(255,255,255,0))"></div>
<div style="left:324.50px;top:363.00px;width:4px;height:3px;background:radial-gradient(closest-side,#ffffff,rgba(255,255,255,0))"></div>
<div style="left:354.50px;top:363.00px;width:4px;height:3px;background:radial-gradient(closest-side,#ffffff,rgba(255,255,255,0))"></div>
<div style="left:382.90px;top:363.00px;width:4px;height:3px;background:radial-gradient(closest-side,#ffffff,rgba(255,255,255,0))"></div>
<div style="left:413.50px;top:363.00px;width:4px;height:3px;background:radial-gradient(closest-side,#ffffff,rgba(255,255,255,0))"></div>
<div style="left:469.80px;top:363.00px;width:4px;height:3px;background:radial-gradient(closest-side,#ffffff,rgba(255,255,255,0))"></div>
<div style="left:501.50px;top:363.00px;width:4px;height:3px;background:radial-gradient(closest-side,#ffffff,rgba(255,255,255,0))"></div>
<div style="left:530.90px;top:363.00px;width:4px;height:3px;background:radial-gradient(closest-side,#ffffff,rgba(255,255,255,0))"></div>
<div style="left:559.50px;top:363.00px;width:4px;height:3px;background:radial-gradient(closest-side,#ffffff,rgba(255,255,255,0))"></div>
<div style="left:588.20px;top:363.00px;width:4px;height:3px;background:radial-gradient(closest-side,#ffffff,rgba(255,255,255,0))"></div>
<div style="left:612.10px;top:363.00px;width:4px;height:3px;background:radial-gradient(closest-side,#ffffff,rgba(255,255,255,0))"></div>
<div style="left:644.80px;top:363.00px;width:4px;height:3px;background:radial-gradient(closest-side,#ffffff,rgba(255,255,255,0))"></div>
<div style="left:676.10px;top:363.00px;width:4px;height:3px;background:radial-gradient(closest-side,#ffffff,rgba(255,255,255,0))"></div>
<div style="left:686.50px;top:363.00px;width:4px;height:3px;background:radial-gradient(closest-side,#ffffff,rgba(255,255,255,0))"></div>
<div class="t" style="left:43.00px;top:348.35px;line-height:7px;color:#1c1c1c">4</div>
<div class="t" style="left:69.00px;top:348.35px;line-height:7px;color:#1c1c1c">MEDQX</div>
<div class="t" style="left:101.30px;top:348.35px;line-height:7px;color:#1c1c1c">1066</div>
<div class="t" style="left:145.60px;top:348.35px;line-height:7px;color:#1c1c1c">20191402</div>
<div class="t" style="left:329.00px;top:348.35px;line-height:7px;color:#1c1c1c">S</div>
<div class="t" style="left:359.00px;top:348.35px;line-height:7px;color:#1c1c1c">S</div>
<div class="t" style="left:387.40px;top:348.35px;line-height:7px;color:#1c1c1c">UND</div>
<div class="t" style="left:506.00px;top:348.35px;line-height:7px;color:#1c1c1c">0</div>
<div class="t" style="left:535.40px;top:348.35px;line-height:7px;color:#1c1c1c">0</div>
<div class="t" style="left:564.00px;top:348.35px;line-height:7px;color:#1c1c1c">5.00</div>
<div class="t" style="left:592.70px;top:348.35px;line-height:7px;color:#1c1c1c">5.00</div>
<div class="t" style="left:649.30px;top:348.35px;line-height:7px;color:#1c1c1c">2000.00</div>
<div class="t" style="left:680.60px;top:348.35px;line-height:7px;color:#1c1c1c">N</div>
<div class="t" style="left:193.40px;top:341.55px;line-height:7px;color:#1c1c1c">MASCARILLAS DESECHABLES<br>TERMOSELLADAS (TAPABOCAS) INVIMA<br>2020DM-0022377 UND</div>
<div class="t" style="left:617.40px;top:341.35px;line-height:7px;color:#1c1c1c">400.00</div>
<div class="btn" style="left:617.40px;top:349.15px;width:10.30px;height:12.30px;"></div>
<svg style="position:absolute;left:619.75px;top:351.70px" width="5" height="6" viewBox="0 0 5 6"><rect x="0.5" y="0.5" width="4" height="5" fill="none" stroke="#c0a8c8" stroke-width="0.55"/></svg>
<div style="left:40.00px;top:364.50px;width:661.30px;height:25.70px;background:#bee5fa;border-radius:1.6px"></div>
<div style="left:66.00px;top:364.50px;width:1.00px;height:25.70px;background:#c8e9fa"></div>
<div style="left:98.30px;top:364.50px;width:1.00px;height:25.70px;background:#c8e9fa"></div>
<div style="left:142.60px;top:364.50px;width:1.00px;height:25.70px;background:#c8e9fa"></div>
<div style="left:190.00px;top:364.50px;width:1.00px;height:25.70px;background:#c8e9fa"></div>
<div style="left:326.00px;top:364.50px;width:1.00px;height:25.70px;background:#c8e9fa"></div>
<div style="left:356.00px;top:364.50px;width:1.00px;height:25.70px;background:#c8e9fa"></div>
<div style="left:384.40px;top:364.50px;width:1.00px;height:25.70px;background:#c8e9fa"></div>
<div style="left:415.00px;top:364.50px;width:1.00px;height:25.70px;background:#c8e9fa"></div>
<div style="left:471.30px;top:364.50px;width:1.00px;height:25.70px;background:#c8e9fa"></div>
<div style="left:503.00px;top:364.50px;width:1.00px;height:25.70px;background:#c8e9fa"></div>
<div style="left:532.40px;top:364.50px;width:1.00px;height:25.70px;background:#c8e9fa"></div>
<div style="left:561.00px;top:364.50px;width:1.00px;height:25.70px;background:#c8e9fa"></div>
<div style="left:589.70px;top:364.50px;width:1.00px;height:25.70px;background:#c8e9fa"></div>
<div style="left:613.60px;top:364.50px;width:1.00px;height:25.70px;background:#c8e9fa"></div>
<div style="left:646.30px;top:364.50px;width:1.00px;height:25.70px;background:#c8e9fa"></div>
<div style="left:677.60px;top:364.50px;width:1.00px;height:25.70px;background:#c8e9fa"></div>
<div style="left:688.00px;top:364.50px;width:1.00px;height:25.70px;background:#c8e9fa"></div>
<div style="left:64.50px;top:363.00px;width:4px;height:3px;background:radial-gradient(closest-side,#ffffff,rgba(255,255,255,0))"></div>
<div style="left:96.80px;top:363.00px;width:4px;height:3px;background:radial-gradient(closest-side,#ffffff,rgba(255,255,255,0))"></div>
<div style="left:141.10px;top:363.00px;width:4px;height:3px;background:radial-gradient(closest-side,#ffffff,rgba(255,255,255,0))"></div>
<div style="left:188.50px;top:363.00px;width:4px;height:3px;background:radial-gradient(closest-side,#ffffff,rgba(255,255,255,0))"></div>
<div style="left:324.50px;top:363.00px;width:4px;height:3px;background:radial-gradient(closest-side,#ffffff,rgba(255,255,255,0))"></div>
<div style="left:354.50px;top:363.00px;width:4px;height:3px;background:radial-gradient(closest-side,#ffffff,rgba(255,255,255,0))"></div>
<div style="left:382.90px;top:363.00px;width:4px;height:3px;background:radial-gradient(closest-side,#ffffff,rgba(255,255,255,0))"></div>
<div style="left:413.50px;top:363.00px;width:4px;height:3px;background:radial-gradient(closest-side,#ffffff,rgba(255,255,255,0))"></div>
<div style="left:469.80px;top:363.00px;width:4px;height:3px;background:radial-gradient(closest-side,#ffffff,rgba(255,255,255,0))"></div>
<div style="left:501.50px;top:363.00px;width:4px;height:3px;background:radial-gradient(closest-side,#ffffff,rgba(255,255,255,0))"></div>
<div style="left:530.90px;top:363.00px;width:4px;height:3px;background:radial-gradient(closest-side,#ffffff,rgba(255,255,255,0))"></div>
<div style="left:559.50px;top:363.00px;width:4px;height:3px;background:radial-gradient(closest-side,#ffffff,rgba(255,255,255,0))"></div>
<div style="left:588.20px;top:363.00px;width:4px;height:3px;background:radial-gradient(closest-side,#ffffff,rgba(255,255,255,0))"></div>
<div style="left:612.10px;top:363.00px;width:4px;height:3px;background:radial-gradient(closest-side,#ffffff,rgba(255,255,255,0))"></div>
<div style="left:644.80px;top:363.00px;width:4px;height:3px;background:radial-gradient(closest-side,#ffffff,rgba(255,255,255,0))"></div>
<div style="left:676.10px;top:363.00px;width:4px;height:3px;background:radial-gradient(closest-side,#ffffff,rgba(255,255,255,0))"></div>
<div style="left:686.50px;top:363.00px;width:4px;height:3px;background:radial-gradient(closest-side,#ffffff,rgba(255,255,255,0))"></div>
<div style="left:64.50px;top:388.00px;width:4px;height:3px;background:radial-gradient(closest-side,#ffffff,rgba(255,255,255,0))"></div>
<div style="left:96.80px;top:388.00px;width:4px;height:3px;background:radial-gradient(closest-side,#ffffff,rgba(255,255,255,0))"></div>
<div style="left:141.10px;top:388.00px;width:4px;height:3px;background:radial-gradient(closest-side,#ffffff,rgba(255,255,255,0))"></div>
<div style="left:188.50px;top:388.00px;width:4px;height:3px;background:radial-gradient(closest-side,#ffffff,rgba(255,255,255,0))"></div>
<div style="left:324.50px;top:388.00px;width:4px;height:3px;background:radial-gradient(closest-side,#ffffff,rgba(255,255,255,0))"></div>
<div style="left:354.50px;top:388.00px;width:4px;height:3px;background:radial-gradient(closest-side,#ffffff,rgba(255,255,255,0))"></div>
<div style="left:382.90px;top:388.00px;width:4px;height:3px;background:radial-gradient(closest-side,#ffffff,rgba(255,255,255,0))"></div>
<div style="left:413.50px;top:388.00px;width:4px;height:3px;background:radial-gradient(closest-side,#ffffff,rgba(255,255,255,0))"></div>
<div style="left:469.80px;top:388.00px;width:4px;height:3px;background:radial-gradient(closest-side,#ffffff,rgba(255,255,255,0))"></div>
<div style="left:501.50px;top:388.00px;width:4px;height:3px;background:radial-gradient(closest-side,#ffffff,rgba(255,255,255,0))"></div>
<div style="left:530.90px;top:388.00px;width:4px;height:3px;background:radial-gradient(closest-side,#ffffff,rgba(255,255,255,0))"></div>
<div style="left:559.50px;top:388.00px;width:4px;height:3px;background:radial-gradient(closest-side,#ffffff,rgba(255,255,255,0))"></div>
<div style="left:588.20px;top:388.00px;width:4px;height:3px;background:radial-gradient(closest-side,#ffffff,rgba(255,255,255,0))"></div>
<div style="left:612.10px;top:388.00px;width:4px;height:3px;background:radial-gradient(closest-side,#ffffff,rgba(255,255,255,0))"></div>
<div style="left:644.80px;top:388.00px;width:4px;height:3px;background:radial-gradient(closest-side,#ffffff,rgba(255,255,255,0))"></div>
<div style="left:676.10px;top:388.00px;width:4px;height:3px;background:radial-gradient(closest-side,#ffffff,rgba(255,255,255,0))"></div>
<div style="left:686.50px;top:388.00px;width:4px;height:3px;background:radial-gradient(closest-side,#ffffff,rgba(255,255,255,0))"></div>
<div class="t" style="left:43.00px;top:373.60px;line-height:7px;color:#1c1c1c">5</div>
<div class="t" style="left:69.00px;top:373.60px;line-height:7px;color:#1c1c1c">MEDQX</div>
<div class="t" style="left:101.30px;top:373.60px;line-height:7px;color:#1c1c1c">1070</div>
<div class="t" style="left:145.60px;top:373.60px;line-height:7px;color:#1c1c1c">19951239</div>
<div class="t" style="left:329.00px;top:373.60px;line-height:7px;color:#1c1c1c">S</div>
<div class="t" style="left:359.00px;top:373.60px;line-height:7px;color:#1c1c1c">S</div>
<div class="t" style="left:387.40px;top:373.60px;line-height:7px;color:#1c1c1c">UND</div>
<div class="t" style="left:506.00px;top:373.60px;line-height:7px;color:#1c1c1c">0</div>
<div class="t" style="left:535.40px;top:373.60px;line-height:7px;color:#1c1c1c">0</div>
<div class="t" style="left:564.00px;top:373.60px;line-height:7px;color:#1c1c1c">3.00</div>
<div class="t" style="left:592.70px;top:373.60px;line-height:7px;color:#1c1c1c">3.00</div>
<div class="t" style="left:649.30px;top:373.60px;line-height:7px;color:#1c1c1c">3150.00</div>
<div class="t" style="left:680.60px;top:373.60px;line-height:7px;color:#1c1c1c">N</div>
<div class="t" style="left:193.40px;top:370.30px;line-height:7px;color:#1c1c1c">ESPONJA DE GASAS ESTERILE INVIMA<br>2015DM-0003258-R1 UND</div>
<div class="t" style="left:617.40px;top:366.60px;line-height:7px;color:#1c1c1c">1050.00</div>
<div class="btn" style="left:617.40px;top:374.40px;width:10.30px;height:12.30px;"></div>
<svg style="position:absolute;left:619.75px;top:376.95px" width="5" height="6" viewBox="0 0 5 6"><rect x="0.5" y="0.5" width="4" height="5" fill="none" stroke="#c0a8c8" stroke-width="0.55"/></svg>
<div style="left:40.00px;top:389.50px;width:661.30px;height:26.50px;background:#bee5fa;border-radius:1.6px"></div>
<div style="left:66.00px;top:389.50px;width:1.00px;height:26.50px;background:#c8e9fa"></div>
<div style="left:98.30px;top:389.50px;width:1.00px;height:26.50px;background:#c8e9fa"></div>
<div style="left:142.60px;top:389.50px;width:1.00px;height:26.50px;background:#c8e9fa"></div>
<div style="left:190.00px;top:389.50px;width:1.00px;height:26.50px;background:#c8e9fa"></div>
<div style="left:326.00px;top:389.50px;width:1.00px;height:26.50px;background:#c8e9fa"></div>
<div style="left:356.00px;top:389.50px;width:1.00px;height:26.50px;background:#c8e9fa"></div>
<div style="left:384.40px;top:389.50px;width:1.00px;height:26.50px;background:#c8e9fa"></div>
<div style="left:415.00px;top:389.50px;width:1.00px;height:26.50px;background:#c8e9fa"></div>
<div style="left:471.30px;top:389.50px;width:1.00px;height:26.50px;background:#c8e9fa"></div>
<div style="left:503.00px;top:389.50px;width:1.00px;height:26.50px;background:#c8e9fa"></div>
<div style="left:532.40px;top:389.50px;width:1.00px;height:26.50px;background:#c8e9fa"></div>
<div style="left:561.00px;top:389.50px;width:1.00px;height:26.50px;background:#c8e9fa"></div>
<div style="left:589.70px;top:389.50px;width:1.00px;height:26.50px;background:#c8e9fa"></div>
<div style="left:613.60px;top:389.50px;width:1.00px;height:26.50px;background:#c8e9fa"></div>
<div style="left:646.30px;top:389.50px;width:1.00px;height:26.50px;background:#c8e9fa"></div>
<div style="left:677.60px;top:389.50px;width:1.00px;height:26.50px;background:#c8e9fa"></div>
<div style="left:688.00px;top:389.50px;width:1.00px;height:26.50px;background:#c8e9fa"></div>
<div style="left:64.50px;top:388.00px;width:4px;height:3px;background:radial-gradient(closest-side,#ffffff,rgba(255,255,255,0))"></div>
<div style="left:96.80px;top:388.00px;width:4px;height:3px;background:radial-gradient(closest-side,#ffffff,rgba(255,255,255,0))"></div>
<div style="left:141.10px;top:388.00px;width:4px;height:3px;background:radial-gradient(closest-side,#ffffff,rgba(255,255,255,0))"></div>
<div style="left:188.50px;top:388.00px;width:4px;height:3px;background:radial-gradient(closest-side,#ffffff,rgba(255,255,255,0))"></div>
<div style="left:324.50px;top:388.00px;width:4px;height:3px;background:radial-gradient(closest-side,#ffffff,rgba(255,255,255,0))"></div>
<div style="left:354.50px;top:388.00px;width:4px;height:3px;background:radial-gradient(closest-side,#ffffff,rgba(255,255,255,0))"></div>
<div style="left:382.90px;top:388.00px;width:4px;height:3px;background:radial-gradient(closest-side,#ffffff,rgba(255,255,255,0))"></div>
<div style="left:413.50px;top:388.00px;width:4px;height:3px;background:radial-gradient(closest-side,#ffffff,rgba(255,255,255,0))"></div>
<div style="left:469.80px;top:388.00px;width:4px;height:3px;background:radial-gradient(closest-side,#ffffff,rgba(255,255,255,0))"></div>
<div style="left:501.50px;top:388.00px;width:4px;height:3px;background:radial-gradient(closest-side,#ffffff,rgba(255,255,255,0))"></div>
<div style="left:530.90px;top:388.00px;width:4px;height:3px;background:radial-gradient(closest-side,#ffffff,rgba(255,255,255,0))"></div>
<div style="left:559.50px;top:388.00px;width:4px;height:3px;background:radial-gradient(closest-side,#ffffff,rgba(255,255,255,0))"></div>
<div style="left:588.20px;top:388.00px;width:4px;height:3px;background:radial-gradient(closest-side,#ffffff,rgba(255,255,255,0))"></div>
<div style="left:612.10px;top:388.00px;width:4px;height:3px;background:radial-gradient(closest-side,#ffffff,rgba(255,255,255,0))"></div>
<div style="left:644.80px;top:388.00px;width:4px;height:3px;background:radial-gradient(closest-side,#ffffff,rgba(255,255,255,0))"></div>
<div style="left:676.10px;top:388.00px;width:4px;height:3px;background:radial-gradient(closest-side,#ffffff,rgba(255,255,255,0))"></div>
<div style="left:686.50px;top:388.00px;width:4px;height:3px;background:radial-gradient(closest-side,#ffffff,rgba(255,255,255,0))"></div>
<div style="left:64.50px;top:413.80px;width:4px;height:3px;background:radial-gradient(closest-side,#ffffff,rgba(255,255,255,0))"></div>
<div style="left:96.80px;top:413.80px;width:4px;height:3px;background:radial-gradient(closest-side,#ffffff,rgba(255,255,255,0))"></div>
<div style="left:141.10px;top:413.80px;width:4px;height:3px;background:radial-gradient(closest-side,#ffffff,rgba(255,255,255,0))"></div>
<div style="left:188.50px;top:413.80px;width:4px;height:3px;background:radial-gradient(closest-side,#ffffff,rgba(255,255,255,0))"></div>
<div style="left:324.50px;top:413.80px;width:4px;height:3px;background:radial-gradient(closest-side,#ffffff,rgba(255,255,255,0))"></div>
<div style="left:354.50px;top:413.80px;width:4px;height:3px;background:radial-gradient(closest-side,#ffffff,rgba(255,255,255,0))"></div>
<div style="left:382.90px;top:413.80px;width:4px;height:3px;background:radial-gradient(closest-side,#ffffff,rgba(255,255,255,0))"></div>
<div style="left:413.50px;top:413.80px;width:4px;height:3px;background:radial-gradient(closest-side,#ffffff,rgba(255,255,255,0))"></div>
<div style="left:469.80px;top:413.80px;width:4px;height:3px;background:radial-gradient(closest-side,#ffffff,rgba(255,255,255,0))"></div>
<div style="left:501.50px;top:413.80px;width:4px;height:3px;background:radial-gradient(closest-side,#ffffff,rgba(255,255,255,0))"></div>
<div style="left:530.90px;top:413.80px;width:4px;height:3px;background:radial-gradient(closest-side,#ffffff,rgba(255,255,255,0))"></div>
<div style="left:559.50px;top:413.80px;width:4px;height:3px;background:radial-gradient(closest-side,#ffffff,rgba(255,255,255,0))"></div>
<div style="left:588.20px;top:413.80px;width:4px;height:3px;background:radial-gradient(closest-side,#ffffff,rgba(255,255,255,0))"></div>
<div style="left:612.10px;top:413.80px;width:4px;height:3px;background:radial-gradient(closest-side,#ffffff,rgba(255,255,255,0))"></div>
<div style="left:644.80px;top:413.80px;width:4px;height:3px;background:radial-gradient(closest-side,#ffffff,rgba(255,255,255,0))"></div>
<div style="left:676.10px;top:413.80px;width:4px;height:3px;background:radial-gradient(closest-side,#ffffff,rgba(255,255,255,0))"></div>
<div style="left:686.50px;top:413.80px;width:4px;height:3px;background:radial-gradient(closest-side,#ffffff,rgba(255,255,255,0))"></div>
<div class="t" style="left:43.00px;top:399.00px;line-height:7px;color:#1c1c1c">6</div>
<div class="t" style="left:69.00px;top:399.00px;line-height:7px;color:#1c1c1c">MEDQX</div>
<div class="t" style="left:101.30px;top:399.00px;line-height:7px;color:#1c1c1c">1075</div>
<div class="t" style="left:145.60px;top:399.00px;line-height:7px;color:#1c1c1c">20070768</div>
<div class="t" style="left:329.00px;top:399.00px;line-height:7px;color:#1c1c1c">S</div>
<div class="t" style="left:359.00px;top:399.00px;line-height:7px;color:#1c1c1c">N</div>
<div class="t" style="left:387.40px;top:399.00px;line-height:7px;color:#1c1c1c">UND</div>
<div class="t" style="left:506.00px;top:399.00px;line-height:7px;color:#1c1c1c">0</div>
<div class="t" style="left:535.40px;top:399.00px;line-height:7px;color:#1c1c1c">0</div>
<div class="t" style="left:564.00px;top:399.00px;line-height:7px;color:#1c1c1c">1.00</div>
<div class="t" style="left:592.70px;top:399.00px;line-height:7px;color:#1c1c1c">1.00</div>
<div class="t" style="left:649.30px;top:399.00px;line-height:7px;color:#1c1c1c">350.00</div>
<div class="t" style="left:680.60px;top:399.00px;line-height:7px;color:#1c1c1c">N</div>
<div class="t" style="left:193.40px;top:392.20px;line-height:7px;color:#1c1c1c">AGUJA HIPOD&Eacute;RMICA NO 18<br>DESECHABLE INVIMA 2013DM-0010773<br>UND</div>
<div class="t" style="left:617.40px;top:392.00px;line-height:7px;color:#1c1c1c">350.00</div>
<div class="btn" style="left:617.40px;top:399.80px;width:10.30px;height:12.30px;"></div>
<svg style="position:absolute;left:619.75px;top:402.35px" width="5" height="6" viewBox="0 0 5 6"><rect x="0.5" y="0.5" width="4" height="5" fill="none" stroke="#c0a8c8" stroke-width="0.55"/></svg>
<div style="left:40.00px;top:415.30px;width:661.30px;height:25.10px;background:#bee5fa;border-radius:1.6px"></div>
<div style="left:66.00px;top:415.30px;width:1.00px;height:25.10px;background:#c8e9fa"></div>
<div style="left:98.30px;top:415.30px;width:1.00px;height:25.10px;background:#c8e9fa"></div>
<div style="left:142.60px;top:415.30px;width:1.00px;height:25.10px;background:#c8e9fa"></div>
<div style="left:190.00px;top:415.30px;width:1.00px;height:25.10px;background:#c8e9fa"></div>
<div style="left:326.00px;top:415.30px;width:1.00px;height:25.10px;background:#c8e9fa"></div>
<div style="left:356.00px;top:415.30px;width:1.00px;height:25.10px;background:#c8e9fa"></div>
<div style="left:384.40px;top:415.30px;width:1.00px;height:25.10px;background:#c8e9fa"></div>
<div style="left:415.00px;top:415.30px;width:1.00px;height:25.10px;background:#c8e9fa"></div>
<div style="left:471.30px;top:415.30px;width:1.00px;height:25.10px;background:#c8e9fa"></div>
<div style="left:503.00px;top:415.30px;width:1.00px;height:25.10px;background:#c8e9fa"></div>
<div style="left:532.40px;top:415.30px;width:1.00px;height:25.10px;background:#c8e9fa"></div>
<div style="left:561.00px;top:415.30px;width:1.00px;height:25.10px;background:#c8e9fa"></div>
<div style="left:589.70px;top:415.30px;width:1.00px;height:25.10px;background:#c8e9fa"></div>
<div style="left:613.60px;top:415.30px;width:1.00px;height:25.10px;background:#c8e9fa"></div>
<div style="left:646.30px;top:415.30px;width:1.00px;height:25.10px;background:#c8e9fa"></div>
<div style="left:677.60px;top:415.30px;width:1.00px;height:25.10px;background:#c8e9fa"></div>
<div style="left:688.00px;top:415.30px;width:1.00px;height:25.10px;background:#c8e9fa"></div>
<div style="left:64.50px;top:413.80px;width:4px;height:3px;background:radial-gradient(closest-side,#ffffff,rgba(255,255,255,0))"></div>
<div style="left:96.80px;top:413.80px;width:4px;height:3px;background:radial-gradient(closest-side,#ffffff,rgba(255,255,255,0))"></div>
<div style="left:141.10px;top:413.80px;width:4px;height:3px;background:radial-gradient(closest-side,#ffffff,rgba(255,255,255,0))"></div>
<div style="left:188.50px;top:413.80px;width:4px;height:3px;background:radial-gradient(closest-side,#ffffff,rgba(255,255,255,0))"></div>
<div style="left:324.50px;top:413.80px;width:4px;height:3px;background:radial-gradient(closest-side,#ffffff,rgba(255,255,255,0))"></div>
<div style="left:354.50px;top:413.80px;width:4px;height:3px;background:radial-gradient(closest-side,#ffffff,rgba(255,255,255,0))"></div>
<div style="left:382.90px;top:413.80px;width:4px;height:3px;background:radial-gradient(closest-side,#ffffff,rgba(255,255,255,0))"></div>
<div style="left:413.50px;top:413.80px;width:4px;height:3px;background:radial-gradient(closest-side,#ffffff,rgba(255,255,255,0))"></div>
<div style="left:469.80px;top:413.80px;width:4px;height:3px;background:radial-gradient(closest-side,#ffffff,rgba(255,255,255,0))"></div>
<div style="left:501.50px;top:413.80px;width:4px;height:3px;background:radial-gradient(closest-side,#ffffff,rgba(255,255,255,0))"></div>
<div style="left:530.90px;top:413.80px;width:4px;height:3px;background:radial-gradient(closest-side,#ffffff,rgba(255,255,255,0))"></div>
<div style="left:559.50px;top:413.80px;width:4px;height:3px;background:radial-gradient(closest-side,#ffffff,rgba(255,255,255,0))"></div>
<div style="left:588.20px;top:413.80px;width:4px;height:3px;background:radial-gradient(closest-side,#ffffff,rgba(255,255,255,0))"></div>
<div style="left:612.10px;top:413.80px;width:4px;height:3px;background:radial-gradient(closest-side,#ffffff,rgba(255,255,255,0))"></div>
<div style="left:644.80px;top:413.80px;width:4px;height:3px;background:radial-gradient(closest-side,#ffffff,rgba(255,255,255,0))"></div>
<div style="left:676.10px;top:413.80px;width:4px;height:3px;background:radial-gradient(closest-side,#ffffff,rgba(255,255,255,0))"></div>
<div style="left:686.50px;top:413.80px;width:4px;height:3px;background:radial-gradient(closest-side,#ffffff,rgba(255,255,255,0))"></div>
<div style="left:64.50px;top:438.20px;width:4px;height:3px;background:radial-gradient(closest-side,#ffffff,rgba(255,255,255,0))"></div>
<div style="left:96.80px;top:438.20px;width:4px;height:3px;background:radial-gradient(closest-side,#ffffff,rgba(255,255,255,0))"></div>
<div style="left:141.10px;top:438.20px;width:4px;height:3px;background:radial-gradient(closest-side,#ffffff,rgba(255,255,255,0))"></div>
<div style="left:188.50px;top:438.20px;width:4px;height:3px;background:radial-gradient(closest-side,#ffffff,rgba(255,255,255,0))"></div>
<div style="left:324.50px;top:438.20px;width:4px;height:3px;background:radial-gradient(closest-side,#ffffff,rgba(255,255,255,0))"></div>
<div style="left:354.50px;top:438.20px;width:4px;height:3px;background:radial-gradient(closest-side,#ffffff,rgba(255,255,255,0))"></div>
<div style="left:382.90px;top:438.20px;width:4px;height:3px;background:radial-gradient(closest-side,#ffffff,rgba(255,255,255,0))"></div>
<div style="left:413.50px;top:438.20px;width:4px;height:3px;background:radial-gradient(closest-side,#ffffff,rgba(255,255,255,0))"></div>
<div style="left:469.80px;top:438.20px;width:4px;height:3px;background:radial-gradient(closest-side,#ffffff,rgba(255,255,255,0))"></div>
<div style="left:501.50px;top:438.20px;width:4px;height:3px;background:radial-gradient(closest-side,#ffffff,rgba(255,255,255,0))"></div>
<div style="left:530.90px;top:438.20px;width:4px;height:3px;background:radial-gradient(closest-side,#ffffff,rgba(255,255,255,0))"></div>
<div style="left:559.50px;top:438.20px;width:4px;height:3px;background:radial-gradient(closest-side,#ffffff,rgba(255,255,255,0))"></div>
<div style="left:588.20px;top:438.20px;width:4px;height:3px;background:radial-gradient(closest-side,#ffffff,rgba(255,255,255,0))"></div>
<div style="left:612.10px;top:438.20px;width:4px;height:3px;background:radial-gradient(closest-side,#ffffff,rgba(255,255,255,0))"></div>
<div style="left:644.80px;top:438.20px;width:4px;height:3px;background:radial-gradient(closest-side,#ffffff,rgba(255,255,255,0))"></div>
<div style="left:676.10px;top:438.20px;width:4px;height:3px;background:radial-gradient(closest-side,#ffffff,rgba(255,255,255,0))"></div>
<div style="left:686.50px;top:438.20px;width:4px;height:3px;background:radial-gradient(closest-side,#ffffff,rgba(255,255,255,0))"></div>
<div class="t" style="left:43.00px;top:424.10px;line-height:7px;color:#1c1c1c">7</div>
<div class="t" style="left:69.00px;top:424.10px;line-height:7px;color:#1c1c1c">MEDQX</div>
<div class="t" style="left:101.30px;top:424.10px;line-height:7px;color:#1c1c1c">1079</div>
<div class="t" style="left:145.60px;top:424.10px;line-height:7px;color:#1c1c1c">1079</div>
<div class="t" style="left:329.00px;top:424.10px;line-height:7px;color:#1c1c1c">S</div>
<div class="t" style="left:359.00px;top:424.10px;line-height:7px;color:#1c1c1c">N</div>
<div class="t" style="left:506.00px;top:424.10px;line-height:7px;color:#1c1c1c">0</div>
<div class="t" style="left:535.40px;top:424.10px;line-height:7px;color:#1c1c1c">0</div>
<div class="t" style="left:564.00px;top:424.10px;line-height:7px;color:#1c1c1c">1.00</div>
<div class="t" style="left:592.70px;top:424.10px;line-height:7px;color:#1c1c1c">1.00</div>
<div class="t" style="left:649.30px;top:424.10px;line-height:7px;color:#1c1c1c">690.00</div>
<div class="t" style="left:680.60px;top:424.10px;line-height:7px;color:#1c1c1c">N</div>
<div class="t" style="left:193.40px;top:420.80px;line-height:7px;color:#1c1c1c">JERINGA 20 ML 2018DM-0001797-R1 SAFE<br>DISPOSITIV</div>
<div class="t" style="left:617.40px;top:417.10px;line-height:7px;color:#1c1c1c">690.00</div>
<div class="btn" style="left:617.40px;top:424.90px;width:10.30px;height:12.30px;"></div>
<svg style="position:absolute;left:619.75px;top:427.45px" width="5" height="6" viewBox="0 0 5 6"><rect x="0.5" y="0.5" width="4" height="5" fill="none" stroke="#c0a8c8" stroke-width="0.55"/></svg>
<div style="left:40.00px;top:439.70px;width:661.30px;height:25.70px;background:#bee5fa;border-radius:1.6px"></div>
<div style="left:66.00px;top:439.70px;width:1.00px;height:25.70px;background:#c8e9fa"></div>
<div style="left:98.30px;top:439.70px;width:1.00px;height:25.70px;background:#c8e9fa"></div>
<div style="left:142.60px;top:439.70px;width:1.00px;height:25.70px;background:#c8e9fa"></div>
<div style="left:190.00px;top:439.70px;width:1.00px;height:25.70px;background:#c8e9fa"></div>
<div style="left:326.00px;top:439.70px;width:1.00px;height:25.70px;background:#c8e9fa"></div>
<div style="left:356.00px;top:439.70px;width:1.00px;height:25.70px;background:#c8e9fa"></div>
<div style="left:384.40px;top:439.70px;width:1.00px;height:25.70px;background:#c8e9fa"></div>
<div style="left:415.00px;top:439.70px;width:1.00px;height:25.70px;background:#c8e9fa"></div>
<div style="left:471.30px;top:439.70px;width:1.00px;height:25.70px;background:#c8e9fa"></div>
<div style="left:503.00px;top:439.70px;width:1.00px;height:25.70px;background:#c8e9fa"></div>
<div style="left:532.40px;top:439.70px;width:1.00px;height:25.70px;background:#c8e9fa"></div>
<div style="left:561.00px;top:439.70px;width:1.00px;height:25.70px;background:#c8e9fa"></div>
<div style="left:589.70px;top:439.70px;width:1.00px;height:25.70px;background:#c8e9fa"></div>
<div style="left:613.60px;top:439.70px;width:1.00px;height:25.70px;background:#c8e9fa"></div>
<div style="left:646.30px;top:439.70px;width:1.00px;height:25.70px;background:#c8e9fa"></div>
<div style="left:677.60px;top:439.70px;width:1.00px;height:25.70px;background:#c8e9fa"></div>
<div style="left:688.00px;top:439.70px;width:1.00px;height:25.70px;background:#c8e9fa"></div>
<div style="left:64.50px;top:438.20px;width:4px;height:3px;background:radial-gradient(closest-side,#ffffff,rgba(255,255,255,0))"></div>
<div style="left:96.80px;top:438.20px;width:4px;height:3px;background:radial-gradient(closest-side,#ffffff,rgba(255,255,255,0))"></div>
<div style="left:141.10px;top:438.20px;width:4px;height:3px;background:radial-gradient(closest-side,#ffffff,rgba(255,255,255,0))"></div>
<div style="left:188.50px;top:438.20px;width:4px;height:3px;background:radial-gradient(closest-side,#ffffff,rgba(255,255,255,0))"></div>
<div style="left:324.50px;top:438.20px;width:4px;height:3px;background:radial-gradient(closest-side,#ffffff,rgba(255,255,255,0))"></div>
<div style="left:354.50px;top:438.20px;width:4px;height:3px;background:radial-gradient(closest-side,#ffffff,rgba(255,255,255,0))"></div>
<div style="left:382.90px;top:438.20px;width:4px;height:3px;background:radial-gradient(closest-side,#ffffff,rgba(255,255,255,0))"></div>
<div style="left:413.50px;top:438.20px;width:4px;height:3px;background:radial-gradient(closest-side,#ffffff,rgba(255,255,255,0))"></div>
<div style="left:469.80px;top:438.20px;width:4px;height:3px;background:radial-gradient(closest-side,#ffffff,rgba(255,255,255,0))"></div>
<div style="left:501.50px;top:438.20px;width:4px;height:3px;background:radial-gradient(closest-side,#ffffff,rgba(255,255,255,0))"></div>
<div style="left:530.90px;top:438.20px;width:4px;height:3px;background:radial-gradient(closest-side,#ffffff,rgba(255,255,255,0))"></div>
<div style="left:559.50px;top:438.20px;width:4px;height:3px;background:radial-gradient(closest-side,#ffffff,rgba(255,255,255,0))"></div>
<div style="left:588.20px;top:438.20px;width:4px;height:3px;background:radial-gradient(closest-side,#ffffff,rgba(255,255,255,0))"></div>
<div style="left:612.10px;top:438.20px;width:4px;height:3px;background:radial-gradient(closest-side,#ffffff,rgba(255,255,255,0))"></div>
<div style="left:644.80px;top:438.20px;width:4px;height:3px;background:radial-gradient(closest-side,#ffffff,rgba(255,255,255,0))"></div>
<div style="left:676.10px;top:438.20px;width:4px;height:3px;background:radial-gradient(closest-side,#ffffff,rgba(255,255,255,0))"></div>
<div style="left:686.50px;top:438.20px;width:4px;height:3px;background:radial-gradient(closest-side,#ffffff,rgba(255,255,255,0))"></div>
<div style="left:64.50px;top:463.20px;width:4px;height:3px;background:radial-gradient(closest-side,#ffffff,rgba(255,255,255,0))"></div>
<div style="left:96.80px;top:463.20px;width:4px;height:3px;background:radial-gradient(closest-side,#ffffff,rgba(255,255,255,0))"></div>
<div style="left:141.10px;top:463.20px;width:4px;height:3px;background:radial-gradient(closest-side,#ffffff,rgba(255,255,255,0))"></div>
<div style="left:188.50px;top:463.20px;width:4px;height:3px;background:radial-gradient(closest-side,#ffffff,rgba(255,255,255,0))"></div>
<div style="left:324.50px;top:463.20px;width:4px;height:3px;background:radial-gradient(closest-side,#ffffff,rgba(255,255,255,0))"></div>
<div style="left:354.50px;top:463.20px;width:4px;height:3px;background:radial-gradient(closest-side,#ffffff,rgba(255,255,255,0))"></div>
<div style="left:382.90px;top:463.20px;width:4px;height:3px;background:radial-gradient(closest-side,#ffffff,rgba(255,255,255,0))"></div>
<div style="left:413.50px;top:463.20px;width:4px;height:3px;background:radial-gradient(closest-side,#ffffff,rgba(255,255,255,0))"></div>
<div style="left:469.80px;top:463.20px;width:4px;height:3px;background:radial-gradient(closest-side,#ffffff,rgba(255,255,255,0))"></div>
<div style="left:501.50px;top:463.20px;width:4px;height:3px;background:radial-gradient(closest-side,#ffffff,rgba(255,255,255,0))"></div>
<div style="left:530.90px;top:463.20px;width:4px;height:3px;background:radial-gradient(closest-side,#ffffff,rgba(255,255,255,0))"></div>
<div style="left:559.50px;top:463.20px;width:4px;height:3px;background:radial-gradient(closest-side,#ffffff,rgba(255,255,255,0))"></div>
<div style="left:588.20px;top:463.20px;width:4px;height:3px;background:radial-gradient(closest-side,#ffffff,rgba(255,255,255,0))"></div>
<div style="left:612.10px;top:463.20px;width:4px;height:3px;background:radial-gradient(closest-side,#ffffff,rgba(255,255,255,0))"></div>
<div style="left:644.80px;top:463.20px;width:4px;height:3px;background:radial-gradient(closest-side,#ffffff,rgba(255,255,255,0))"></div>
<div style="left:676.10px;top:463.20px;width:4px;height:3px;background:radial-gradient(closest-side,#ffffff,rgba(255,255,255,0))"></div>
<div style="left:686.50px;top:463.20px;width:4px;height:3px;background:radial-gradient(closest-side,#ffffff,rgba(255,255,255,0))"></div>
<div class="t" style="left:43.00px;top:448.80px;line-height:7px;color:#1c1c1c">8</div>
<div class="t" style="left:69.00px;top:448.80px;line-height:7px;color:#1c1c1c">MEDQX</div>
<div class="t" style="left:101.30px;top:448.80px;line-height:7px;color:#1c1c1c">1101</div>
<div class="t" style="left:145.60px;top:448.80px;line-height:7px;color:#1c1c1c">1101</div>
<div class="t" style="left:329.00px;top:448.80px;line-height:7px;color:#1c1c1c">S</div>
<div class="t" style="left:359.00px;top:448.80px;line-height:7px;color:#1c1c1c">S</div>
<div class="t" style="left:387.40px;top:448.80px;line-height:7px;color:#1c1c1c">Aerosol</div>
<div class="t" style="left:506.00px;top:448.80px;line-height:7px;color:#1c1c1c">0</div>
<div class="t" style="left:535.40px;top:448.80px;line-height:7px;color:#1c1c1c">0</div>
<div class="t" style="left:564.00px;top:448.80px;line-height:7px;color:#1c1c1c">1.00</div>
<div class="t" style="left:592.70px;top:448.80px;line-height:7px;color:#1c1c1c">1.00</div>
<div class="t" style="left:649.30px;top:448.80px;line-height:7px;color:#1c1c1c">15100.00</div>
<div class="t" style="left:680.60px;top:448.80px;line-height:7px;color:#1c1c1c">N</div>
<div class="t" style="left:193.40px;top:449.00px;line-height:7px;color:#1c1c1c">KIT DE ROPA DESECHABLE () Aerosol</div>
<div class="t" style="left:617.40px;top:441.80px;line-height:7px;color:#1c1c1c">15100.00</div>
<div class="btn" style="left:617.40px;top:449.60px;width:10.30px;height:12.30px;"></div>
<svg style="position:absolute;left:619.75px;top:452.15px" width="5" height="6" viewBox="0 0 5 6"><rect x="0.5" y="0.5" width="4" height="5" fill="none" stroke="#c0a8c8" stroke-width="0.55"/></svg>
<div style="left:40.00px;top:464.70px;width:661.30px;height:33.30px;background:#bee5fa;border-radius:1.6px"></div>
<div style="left:66.00px;top:464.70px;width:1.00px;height:33.30px;background:#c8e9fa"></div>
<div style="left:98.30px;top:464.70px;width:1.00px;height:33.30px;background:#c8e9fa"></div>
<div style="left:142.60px;top:464.70px;width:1.00px;height:33.30px;background:#c8e9fa"></div>
<div style="left:190.00px;top:464.70px;width:1.00px;height:33.30px;background:#c8e9fa"></div>
<div style="left:326.00px;top:464.70px;width:1.00px;height:33.30px;background:#c8e9fa"></div>
<div style="left:356.00px;top:464.70px;width:1.00px;height:33.30px;background:#c8e9fa"></div>
<div style="left:384.40px;top:464.70px;width:1.00px;height:33.30px;background:#c8e9fa"></div>
<div style="left:415.00px;top:464.70px;width:1.00px;height:33.30px;background:#c8e9fa"></div>
<div style="left:471.30px;top:464.70px;width:1.00px;height:33.30px;background:#c8e9fa"></div>
<div style="left:503.00px;top:464.70px;width:1.00px;height:33.30px;background:#c8e9fa"></div>
<div style="left:532.40px;top:464.70px;width:1.00px;height:33.30px;background:#c8e9fa"></div>
<div style="left:561.00px;top:464.70px;width:1.00px;height:33.30px;background:#c8e9fa"></div>
<div style="left:589.70px;top:464.70px;width:1.00px;height:33.30px;background:#c8e9fa"></div>
<div style="left:613.60px;top:464.70px;width:1.00px;height:33.30px;background:#c8e9fa"></div>
<div style="left:646.30px;top:464.70px;width:1.00px;height:33.30px;background:#c8e9fa"></div>
<div style="left:677.60px;top:464.70px;width:1.00px;height:33.30px;background:#c8e9fa"></div>
<div style="left:688.00px;top:464.70px;width:1.00px;height:33.30px;background:#c8e9fa"></div>
<div style="left:64.50px;top:463.20px;width:4px;height:3px;background:radial-gradient(closest-side,#ffffff,rgba(255,255,255,0))"></div>
<div style="left:96.80px;top:463.20px;width:4px;height:3px;background:radial-gradient(closest-side,#ffffff,rgba(255,255,255,0))"></div>
<div style="left:141.10px;top:463.20px;width:4px;height:3px;background:radial-gradient(closest-side,#ffffff,rgba(255,255,255,0))"></div>
<div style="left:188.50px;top:463.20px;width:4px;height:3px;background:radial-gradient(closest-side,#ffffff,rgba(255,255,255,0))"></div>
<div style="left:324.50px;top:463.20px;width:4px;height:3px;background:radial-gradient(closest-side,#ffffff,rgba(255,255,255,0))"></div>
<div style="left:354.50px;top:463.20px;width:4px;height:3px;background:radial-gradient(closest-side,#ffffff,rgba(255,255,255,0))"></div>
<div style="left:382.90px;top:463.20px;width:4px;height:3px;background:radial-gradient(closest-side,#ffffff,rgba(255,255,255,0))"></div>
<div style="left:413.50px;top:463.20px;width:4px;height:3px;background:radial-gradient(closest-side,#ffffff,rgba(255,255,255,0))"></div>
<div style="left:469.80px;top:463.20px;width:4px;height:3px;background:radial-gradient(closest-side,#ffffff,rgba(255,255,255,0))"></div>
<div style="left:501.50px;top:463.20px;width:4px;height:3px;background:radial-gradient(closest-side,#ffffff,rgba(255,255,255,0))"></div>
<div style="left:530.90px;top:463.20px;width:4px;height:3px;background:radial-gradient(closest-side,#ffffff,rgba(255,255,255,0))"></div>
<div style="left:559.50px;top:463.20px;width:4px;height:3px;background:radial-gradient(closest-side,#ffffff,rgba(255,255,255,0))"></div>
<div style="left:588.20px;top:463.20px;width:4px;height:3px;background:radial-gradient(closest-side,#ffffff,rgba(255,255,255,0))"></div>
<div style="left:612.10px;top:463.20px;width:4px;height:3px;background:radial-gradient(closest-side,#ffffff,rgba(255,255,255,0))"></div>
<div style="left:644.80px;top:463.20px;width:4px;height:3px;background:radial-gradient(closest-side,#ffffff,rgba(255,255,255,0))"></div>
<div style="left:676.10px;top:463.20px;width:4px;height:3px;background:radial-gradient(closest-side,#ffffff,rgba(255,255,255,0))"></div>
<div style="left:686.50px;top:463.20px;width:4px;height:3px;background:radial-gradient(closest-side,#ffffff,rgba(255,255,255,0))"></div>
<div style="left:64.50px;top:495.80px;width:4px;height:3px;background:radial-gradient(closest-side,#ffffff,rgba(255,255,255,0))"></div>
<div style="left:96.80px;top:495.80px;width:4px;height:3px;background:radial-gradient(closest-side,#ffffff,rgba(255,255,255,0))"></div>
<div style="left:141.10px;top:495.80px;width:4px;height:3px;background:radial-gradient(closest-side,#ffffff,rgba(255,255,255,0))"></div>
<div style="left:188.50px;top:495.80px;width:4px;height:3px;background:radial-gradient(closest-side,#ffffff,rgba(255,255,255,0))"></div>
<div style="left:324.50px;top:495.80px;width:4px;height:3px;background:radial-gradient(closest-side,#ffffff,rgba(255,255,255,0))"></div>
<div style="left:354.50px;top:495.80px;width:4px;height:3px;background:radial-gradient(closest-side,#ffffff,rgba(255,255,255,0))"></div>
<div style="left:382.90px;top:495.80px;width:4px;height:3px;background:radial-gradient(closest-side,#ffffff,rgba(255,255,255,0))"></div>
<div style="left:413.50px;top:495.80px;width:4px;height:3px;background:radial-gradient(closest-side,#ffffff,rgba(255,255,255,0))"></div>
<div style="left:469.80px;top:495.80px;width:4px;height:3px;background:radial-gradient(closest-side,#ffffff,rgba(255,255,255,0))"></div>
<div style="left:501.50px;top:495.80px;width:4px;height:3px;background:radial-gradient(closest-side,#ffffff,rgba(255,255,255,0))"></div>
<div style="left:530.90px;top:495.80px;width:4px;height:3px;background:radial-gradient(closest-side,#ffffff,rgba(255,255,255,0))"></div>
<div style="left:559.50px;top:495.80px;width:4px;height:3px;background:radial-gradient(closest-side,#ffffff,rgba(255,255,255,0))"></div>
<div style="left:588.20px;top:495.80px;width:4px;height:3px;background:radial-gradient(closest-side,#ffffff,rgba(255,255,255,0))"></div>
<div style="left:612.10px;top:495.80px;width:4px;height:3px;background:radial-gradient(closest-side,#ffffff,rgba(255,255,255,0))"></div>
<div style="left:644.80px;top:495.80px;width:4px;height:3px;background:radial-gradient(closest-side,#ffffff,rgba(255,255,255,0))"></div>
<div style="left:676.10px;top:495.80px;width:4px;height:3px;background:radial-gradient(closest-side,#ffffff,rgba(255,255,255,0))"></div>
<div style="left:686.50px;top:495.80px;width:4px;height:3px;background:radial-gradient(closest-side,#ffffff,rgba(255,255,255,0))"></div>
<div class="t" style="left:43.00px;top:477.60px;line-height:7px;color:#1c1c1c">9</div>
<div class="t" style="left:69.00px;top:477.60px;line-height:7px;color:#1c1c1c">MEDQX</div>
<div class="t" style="left:101.30px;top:477.60px;line-height:7px;color:#1c1c1c">1104</div>
<div class="t" style="left:145.60px;top:477.60px;line-height:7px;color:#1c1c1c">B05CB01</div>
<div class="t" style="left:329.00px;top:477.60px;line-height:7px;color:#1c1c1c">S</div>
<div class="t" style="left:359.00px;top:477.60px;line-height:7px;color:#1c1c1c">N</div>
<div class="t" style="left:387.40px;top:477.60px;line-height:7px;color:#1c1c1c">SOLU</div>
<div class="t" style="left:506.00px;top:477.60px;line-height:7px;color:#1c1c1c">0</div>
<div class="t" style="left:535.40px;top:477.60px;line-height:7px;color:#1c1c1c">0</div>
<div class="t" style="left:564.00px;top:477.60px;line-height:7px;color:#1c1c1c">2.00</div>
<div class="t" style="left:592.70px;top:477.60px;line-height:7px;color:#1c1c1c">2.00</div>
<div class="t" style="left:649.30px;top:477.60px;line-height:7px;color:#1c1c1c">5000.00</div>
<div class="t" style="left:680.60px;top:477.60px;line-height:7px;color:#1c1c1c">N</div>
<div class="t" style="left:193.40px;top:467.30px;line-height:7px;color:#1c1c1c">CLORURO DE SODIO AL 0.9% USP 500 ML<br>2008 M-001117-R3 (BAXTER<br>INTERNATIONAL INC.) (ATC B05CB01) 500<br>SOLU</div>
<div class="t" style="left:617.40px;top:470.60px;line-height:7px;color:#1c1c1c">2500.00</div>
<div class="btn" style="left:617.40px;top:478.40px;width:10.30px;height:12.30px;"></div>
<svg style="position:absolute;left:619.75px;top:480.95px" width="5" height="6" viewBox="0 0 5 6"><rect x="0.5" y="0.5" width="4" height="5" fill="none" stroke="#c0a8c8" stroke-width="0.55"/></svg>
<div style="left:40.00px;top:497.30px;width:661.30px;height:32.30px;background:#bee5fa;border-radius:1.6px"></div>
<div style="left:66.00px;top:497.30px;width:1.00px;height:32.30px;background:#c8e9fa"></div>
<div style="left:98.30px;top:497.30px;width:1.00px;height:32.30px;background:#c8e9fa"></div>
<div style="left:142.60px;top:497.30px;width:1.00px;height:32.30px;background:#c8e9fa"></div>
<div style="left:190.00px;top:497.30px;width:1.00px;height:32.30px;background:#c8e9fa"></div>
<div style="left:326.00px;top:497.30px;width:1.00px;height:32.30px;background:#c8e9fa"></div>
<div style="left:356.00px;top:497.30px;width:1.00px;height:32.30px;background:#c8e9fa"></div>
<div style="left:384.40px;top:497.30px;width:1.00px;height:32.30px;background:#c8e9fa"></div>
<div style="left:415.00px;top:497.30px;width:1.00px;height:32.30px;background:#c8e9fa"></div>
<div style="left:471.30px;top:497.30px;width:1.00px;height:32.30px;background:#c8e9fa"></div>
<div style="left:503.00px;top:497.30px;width:1.00px;height:32.30px;background:#c8e9fa"></div>
<div style="left:532.40px;top:497.30px;width:1.00px;height:32.30px;background:#c8e9fa"></div>
<div style="left:561.00px;top:497.30px;width:1.00px;height:32.30px;background:#c8e9fa"></div>
<div style="left:589.70px;top:497.30px;width:1.00px;height:32.30px;background:#c8e9fa"></div>
<div style="left:613.60px;top:497.30px;width:1.00px;height:32.30px;background:#c8e9fa"></div>
<div style="left:646.30px;top:497.30px;width:1.00px;height:32.30px;background:#c8e9fa"></div>
<div style="left:677.60px;top:497.30px;width:1.00px;height:32.30px;background:#c8e9fa"></div>
<div style="left:688.00px;top:497.30px;width:1.00px;height:32.30px;background:#c8e9fa"></div>
<div style="left:64.50px;top:495.80px;width:4px;height:3px;background:radial-gradient(closest-side,#ffffff,rgba(255,255,255,0))"></div>
<div style="left:96.80px;top:495.80px;width:4px;height:3px;background:radial-gradient(closest-side,#ffffff,rgba(255,255,255,0))"></div>
<div style="left:141.10px;top:495.80px;width:4px;height:3px;background:radial-gradient(closest-side,#ffffff,rgba(255,255,255,0))"></div>
<div style="left:188.50px;top:495.80px;width:4px;height:3px;background:radial-gradient(closest-side,#ffffff,rgba(255,255,255,0))"></div>
<div style="left:324.50px;top:495.80px;width:4px;height:3px;background:radial-gradient(closest-side,#ffffff,rgba(255,255,255,0))"></div>
<div style="left:354.50px;top:495.80px;width:4px;height:3px;background:radial-gradient(closest-side,#ffffff,rgba(255,255,255,0))"></div>
<div style="left:382.90px;top:495.80px;width:4px;height:3px;background:radial-gradient(closest-side,#ffffff,rgba(255,255,255,0))"></div>
<div style="left:413.50px;top:495.80px;width:4px;height:3px;background:radial-gradient(closest-side,#ffffff,rgba(255,255,255,0))"></div>
<div style="left:469.80px;top:495.80px;width:4px;height:3px;background:radial-gradient(closest-side,#ffffff,rgba(255,255,255,0))"></div>
<div style="left:501.50px;top:495.80px;width:4px;height:3px;background:radial-gradient(closest-side,#ffffff,rgba(255,255,255,0))"></div>
<div style="left:530.90px;top:495.80px;width:4px;height:3px;background:radial-gradient(closest-side,#ffffff,rgba(255,255,255,0))"></div>
<div style="left:559.50px;top:495.80px;width:4px;height:3px;background:radial-gradient(closest-side,#ffffff,rgba(255,255,255,0))"></div>
<div style="left:588.20px;top:495.80px;width:4px;height:3px;background:radial-gradient(closest-side,#ffffff,rgba(255,255,255,0))"></div>
<div style="left:612.10px;top:495.80px;width:4px;height:3px;background:radial-gradient(closest-side,#ffffff,rgba(255,255,255,0))"></div>
<div style="left:644.80px;top:495.80px;width:4px;height:3px;background:radial-gradient(closest-side,#ffffff,rgba(255,255,255,0))"></div>
<div style="left:676.10px;top:495.80px;width:4px;height:3px;background:radial-gradient(closest-side,#ffffff,rgba(255,255,255,0))"></div>
<div style="left:686.50px;top:495.80px;width:4px;height:3px;background:radial-gradient(closest-side,#ffffff,rgba(255,255,255,0))"></div>
<div style="left:64.50px;top:528.10px;width:4px;height:3px;background:radial-gradient(closest-side,#ffffff,rgba(255,255,255,0))"></div>
<div style="left:96.80px;top:528.10px;width:4px;height:3px;background:radial-gradient(closest-side,#ffffff,rgba(255,255,255,0))"></div>
<div style="left:141.10px;top:528.10px;width:4px;height:3px;background:radial-gradient(closest-side,#ffffff,rgba(255,255,255,0))"></div>
<div style="left:188.50px;top:528.10px;width:4px;height:3px;background:radial-gradient(closest-side,#ffffff,rgba(255,255,255,0))"></div>
<div style="left:324.50px;top:528.10px;width:4px;height:3px;background:radial-gradient(closest-side,#ffffff,rgba(255,255,255,0))"></div>
<div style="left:354.50px;top:528.10px;width:4px;height:3px;background:radial-gradient(closest-side,#ffffff,rgba(255,255,255,0))"></div>
<div style="left:382.90px;top:528.10px;width:4px;height:3px;background:radial-gradient(closest-side,#ffffff,rgba(255,255,255,0))"></div>
<div style="left:413.50px;top:528.10px;width:4px;height:3px;background:radial-gradient(closest-side,#ffffff,rgba(255,255,255,0))"></div>
<div style="left:469.80px;top:528.10px;width:4px;height:3px;background:radial-gradient(closest-side,#ffffff,rgba(255,255,255,0))"></div>
<div style="left:501.50px;top:528.10px;width:4px;height:3px;background:radial-gradient(closest-side,#ffffff,rgba(255,255,255,0))"></div>
<div style="left:530.90px;top:528.10px;width:4px;height:3px;background:radial-gradient(closest-side,#ffffff,rgba(255,255,255,0))"></div>
<div style="left:559.50px;top:528.10px;width:4px;height:3px;background:radial-gradient(closest-side,#ffffff,rgba(255,255,255,0))"></div>
<div style="left:588.20px;top:528.10px;width:4px;height:3px;background:radial-gradient(closest-side,#ffffff,rgba(255,255,255,0))"></div>
<div style="left:612.10px;top:528.10px;width:4px;height:3px;background:radial-gradient(closest-side,#ffffff,rgba(255,255,255,0))"></div>
<div style="left:644.80px;top:528.10px;width:4px;height:3px;background:radial-gradient(closest-side,#ffffff,rgba(255,255,255,0))"></div>
<div style="left:676.10px;top:528.10px;width:4px;height:3px;background:radial-gradient(closest-side,#ffffff,rgba(255,255,255,0))"></div>
<div style="left:686.50px;top:528.10px;width:4px;height:3px;background:radial-gradient(closest-side,#ffffff,rgba(255,255,255,0))"></div>
<div class="t" style="left:43.00px;top:510.05px;line-height:7px;color:#1c1c1c">10</div>
<div class="t" style="left:69.00px;top:510.05px;line-height:7px;color:#1c1c1c">MEDQX</div>
<div class="t" style="left:101.30px;top:510.05px;line-height:7px;color:#1c1c1c">1117</div>
<div class="t" style="left:145.60px;top:510.05px;line-height:7px;color:#1c1c1c">20123545</div>
<div class="t" style="left:329.00px;top:510.05px;line-height:7px;color:#1c1c1c">S</div>
<div class="t" style="left:359.00px;top:510.05px;line-height:7px;color:#1c1c1c">N</div>
<div class="t" style="left:387.40px;top:510.05px;line-height:7px;color:#1c1c1c">UND</div>
<div class="t" style="left:506.00px;top:510.05px;line-height:7px;color:#1c1c1c">0</div>
<div class="t" style="left:535.40px;top:510.05px;line-height:7px;color:#1c1c1c">0</div>
<div class="t" style="left:564.00px;top:510.05px;line-height:7px;color:#1c1c1c">1.00</div>
<div class="t" style="left:592.70px;top:510.05px;line-height:7px;color:#1c1c1c">1.00</div>
<div class="t" style="left:649.30px;top:510.05px;line-height:7px;color:#1c1c1c">550.00</div>
<div class="t" style="left:680.60px;top:510.05px;line-height:7px;color:#1c1c1c">N</div>
<div class="t" style="left:193.40px;top:499.75px;line-height:7px;color:#1c1c1c">ESPARADRAPO CUREBAND<br>MICROPOROSO - CINTA ADHESIVA<br>HIPOALERG&Eacute;NICA-INVIMA 2017DM-<br>0015914 () (ATC ) UND</div>
<div class="t" style="left:617.40px;top:503.05px;line-height:7px;color:#1c1c1c">550.00</div>
<div class="btn" style="left:617.40px;top:510.85px;width:10.30px;height:12.30px;"></div>
<svg style="position:absolute;left:619.75px;top:513.40px" width="5" height="6" viewBox="0 0 5 6"><rect x="0.5" y="0.5" width="4" height="5" fill="none" stroke="#c0a8c8" stroke-width="0.55"/></svg>
<div style="left:38.30px;top:533.30px;width:664.20px;height:5.30px;background:#f1f1ef;border:1px solid #d6d6d3;border-radius:3px;box-sizing:border-box"></div>
<div style="left:38.30px;top:540.50px;width:330.40px;height:19.00px;background:#f1f1f1;border:1px solid #d4d4d4;border-radius:3px;box-sizing:border-box"></div>
<div style="left:371.40px;top:540.50px;width:331.10px;height:19.00px;background:#f1f1f1;border:1px solid #d4d4d4;border-radius:3px;box-sizing:border-box"></div>
<div class="t" style="left:41.40px;top:547.05px;line-height:7px;color:#25259a;font-weight:bold">(CE) FOR - FORMULA MEDICA (6395) EPS002ST ()</div>
<div class="btn" style="left:374.00px;top:543.80px;width:43.00px;height:12.00px;"></div>
<div class="t" style="left:377.30px;top:545.35px;line-height:7px;color:#4848a8;font-size:6.5px">&#9998;</div>
<div class="t" style="left:388.00px;top:545.35px;line-height:7px;color:#3c3ca0">Modificar</div>
<div class="btn" style="left:419.30px;top:543.80px;width:37.70px;height:12.00px;"></div>
<div class="t" style="left:421.00px;top:545.35px;line-height:7px;color:#6a5aa8;font-size:7px">&#8962;</div>
<div class="t" style="left:431.00px;top:545.35px;line-height:7px;color:#3c3ca0">Imprimir</div>
<div style="left:38.30px;top:560.70px;width:65.70px;height:11.50px;background:#bee5fa;border-radius:2.5px"></div>
<div style="left:105.60px;top:560.70px;width:264.00px;height:11.50px;background:#fbfbfa;border-radius:2.5px"></div>
<div class="t" style="left:40.80px;top:563.05px;line-height:7px;color:#1c1c1c">Fecha</div>
<div class="t" style="left:107.20px;top:563.05px;line-height:7px;color:#1c1c1c">2022-03-25</div>
<div style="left:371.30px;top:560.70px;width:65.70px;height:11.50px;background:#bee5fa;border-radius:2.5px"></div>
<div style="left:438.60px;top:560.70px;width:263.90px;height:11.50px;background:#fbfbfa;border-radius:2.5px"></div>
<div class="t" style="left:373.50px;top:563.05px;line-height:7px;color:#1c1c1c">Autorizacion</div>
<div class="t" style="left:440.00px;top:563.05px;line-height:7px;color:#1c1c1c">2212135186 Fecha: 0000-00-00 Vence: 0000-00-00</div>
<div style="left:38.30px;top:573.70px;width:65.70px;height:11.70px;background:#bee5fa;border-radius:2.5px"></div>
<div style="left:105.60px;top:573.70px;width:264.00px;height:11.70px;background:#fbfbfa;border-radius:2.5px"></div>
<div class="t" style="left:40.80px;top:576.15px;line-height:7px;color:#1c1c1c"></div>
<div style="left:371.30px;top:573.70px;width:65.70px;height:11.70px;background:#bee5fa;border-radius:2.5px"></div>
<div style="left:438.60px;top:573.70px;width:263.90px;height:11.70px;background:#fbfbfa;border-radius:2.5px"></div>
<div style="left:0.00px;top:576.00px;width:750.00px;height:24.00px;background:#fff"></div>
<div style="left:0.00px;top:576.00px;width:741.00px;height:6.70px;background:#f1f1f1"></div>
<div style="left:9.00px;top:576.50px;width:651.00px;height:5.70px;background:#c1c1c1"></div>
<svg style="position:absolute;left:1px;top:576px" width="8" height="7" viewBox="0 0 8 7"><path d="M5.5 1.2V5.8L2.5 3.5Z" fill="#a3a3a3"/></svg>
<svg style="position:absolute;left:733px;top:576px" width="8" height="7" viewBox="0 0 8 7"><path d="M2.5 1.2V5.8L5.5 3.5Z" fill="#505050"/></svg>
</body></html>
